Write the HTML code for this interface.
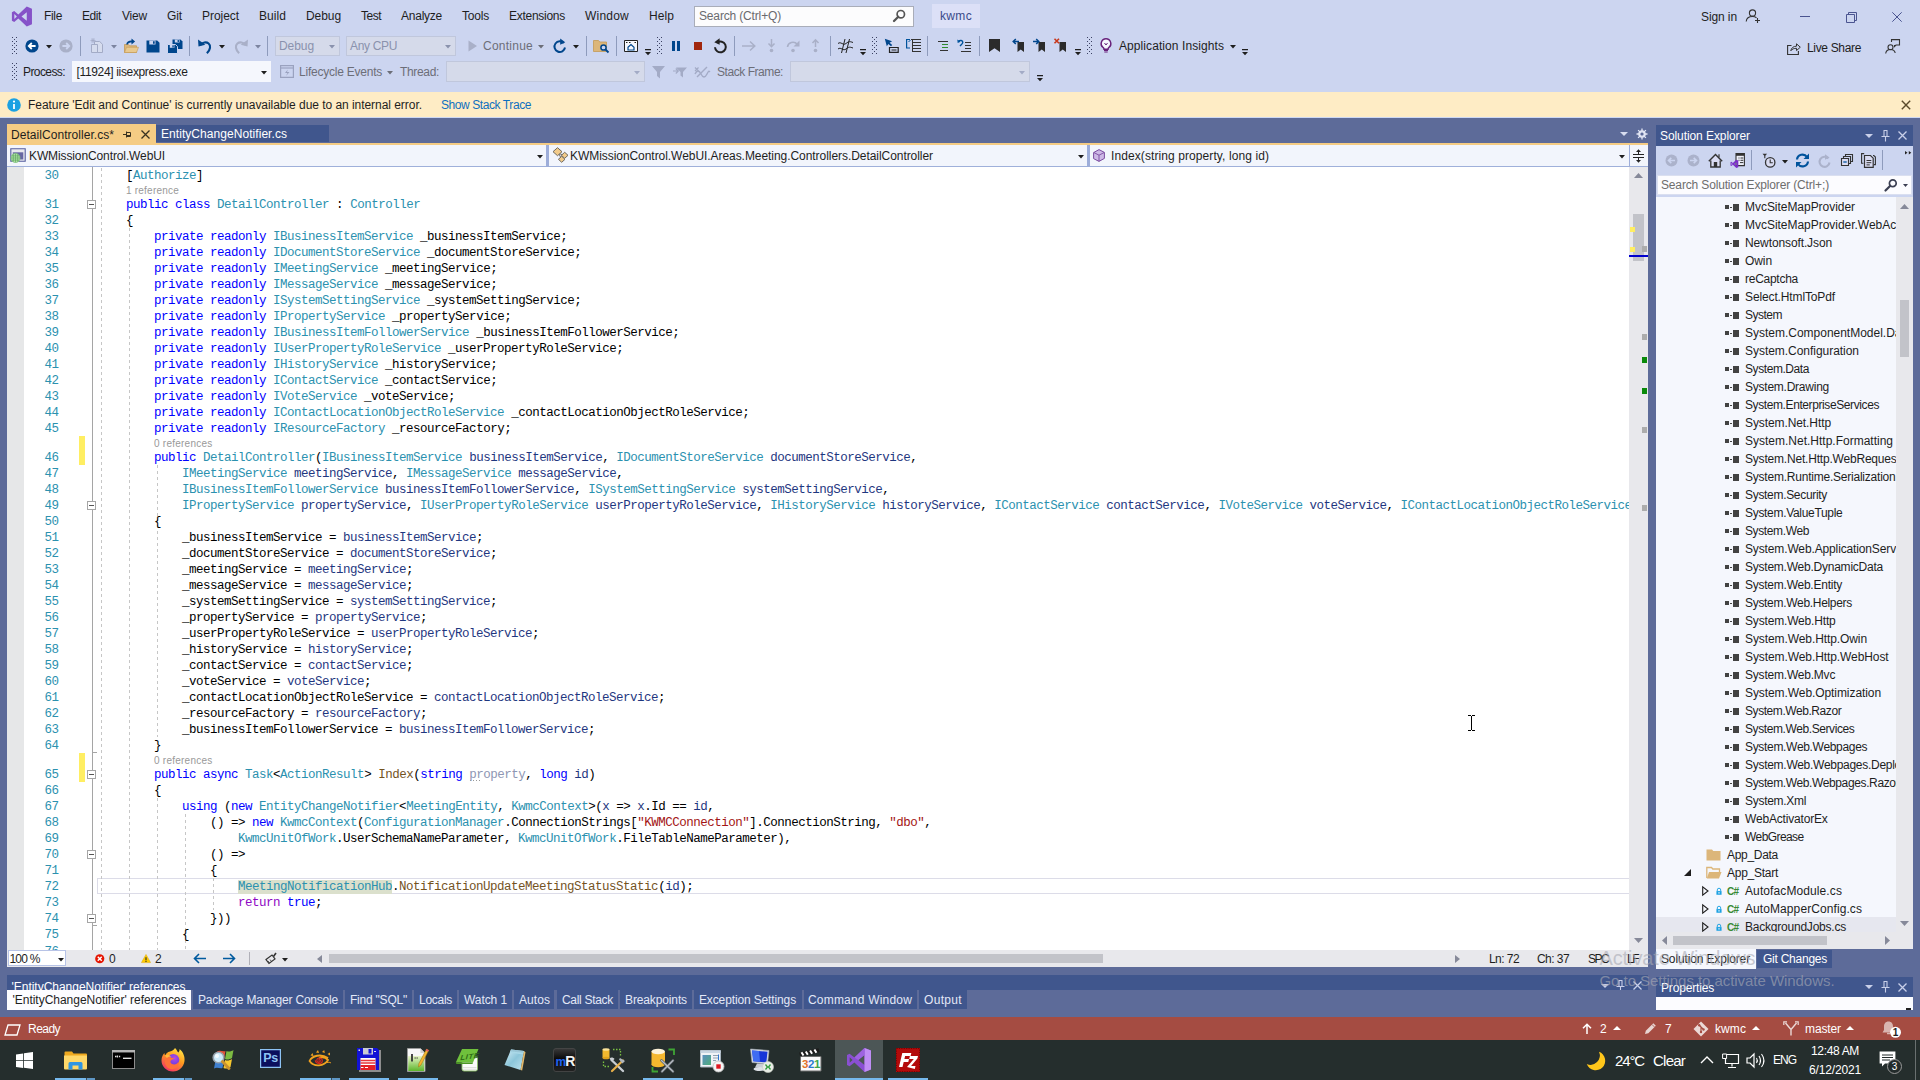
<!DOCTYPE html>
<html><head><meta charset="utf-8"><title>kwmc (Debugging) - Microsoft Visual Studio</title>
<style>
html,body{margin:0;padding:0;}
body{width:1920px;height:1080px;overflow:hidden;position:relative;background:#5D6B99;
 font-family:"Liberation Sans",sans-serif;font-size:12px;color:#1e1e1e;}
body div, body svg{position:absolute;box-sizing:border-box;}
svg{overflow:visible;}
.mono{font-family:"Liberation Mono",monospace;}
.code{font-family:"Liberation Mono",monospace;font-size:12.5px;letter-spacing:-0.5px;line-height:16px;white-space:pre;color:#000;height:16px;}
.code span{position:static;}
.k{color:#0000ff}.t{color:#2b91af}.p{color:#1f377f}.m{color:#74531f}.s{color:#a31515}.c{color:#8f08c4}
.ln{font-family:"Liberation Mono",monospace;font-size:12.5px;letter-spacing:-0.5px;line-height:16px;color:#2b91af;text-align:right;width:40px;left:20px;height:16px;white-space:pre;}
.cl{font-size:10px;color:#9a9a9a;line-height:13px;white-space:pre;}
.h{color:#2b91af;background:#DBE0CC;}
.u{color:#8e96b3;}

</style></head>
<body>
<div style="left:0px;top:0px;width:1920px;height:92px;background:#CCD5F0;"></div>
<div style="left:0px;top:92px;width:1920px;height:26px;background:#FEECC5;"></div>
<div style="left:0px;top:117px;width:1920px;height:1px;background:#CDD8F3;"></div>
<div style="left:0px;top:1017px;width:1920px;height:23px;background:#A54C42;"></div>
<div style="left:0px;top:1040px;width:1920px;height:40px;background:#252E2D;"></div>
<svg style="left:11px;top:5.5px;" preserveAspectRatio="none" width="21.5" height="21" viewBox="0 0 24 22"><path d="M17.6 0.6 23.4 3v16l-5.8 2.4-9.4-8.3-4.6 3.6L1 15.4V6.6l2.6-1.3 4.6 3.6zM3.7 8.3v5.4L6.6 11zm8 2.7 5.9 4.5v-9z" fill="#8652C8"/></svg>
<div style="top:8.0px;line-height:16px;font-size:12px;color:#1e1e1e;white-space:pre;left:44px;letter-spacing:-0.334px;">File</div>
<div style="top:8.0px;line-height:16px;font-size:12px;color:#1e1e1e;white-space:pre;left:82px;letter-spacing:-0.420px;">Edit</div>
<div style="top:8.0px;line-height:16px;font-size:12px;color:#1e1e1e;white-space:pre;left:122px;letter-spacing:-0.199px;">View</div>
<div style="top:8.0px;line-height:16px;font-size:12px;color:#1e1e1e;white-space:pre;left:167px;letter-spacing:-0.111px;">Git</div>
<div style="top:8.0px;line-height:16px;font-size:12px;color:#1e1e1e;white-space:pre;left:202px;letter-spacing:-0.050px;">Project</div>
<div style="top:8.0px;line-height:16px;font-size:12px;color:#1e1e1e;white-space:pre;left:259px;letter-spacing:0.063px;">Build</div>
<div style="top:8.0px;line-height:16px;font-size:12px;color:#1e1e1e;white-space:pre;left:306px;letter-spacing:-0.072px;">Debug</div>
<div style="top:8.0px;line-height:16px;font-size:12px;color:#1e1e1e;white-space:pre;left:361px;letter-spacing:-0.502px;">Test</div>
<div style="top:8.0px;line-height:16px;font-size:12px;color:#1e1e1e;white-space:pre;left:401px;letter-spacing:-0.242px;">Analyze</div>
<div style="top:8.0px;line-height:16px;font-size:12px;color:#1e1e1e;white-space:pre;left:462px;letter-spacing:-0.203px;">Tools</div>
<div style="top:8.0px;line-height:16px;font-size:12px;color:#1e1e1e;white-space:pre;left:509px;letter-spacing:-0.270px;">Extensions</div>
<div style="top:8.0px;line-height:16px;font-size:12px;color:#1e1e1e;white-space:pre;left:585px;letter-spacing:0.220px;">Window</div>
<div style="top:8.0px;line-height:16px;font-size:12px;color:#1e1e1e;white-space:pre;left:649px;letter-spacing:0.080px;">Help</div>
<div style="left:694px;top:5.5px;width:220px;height:21px;background:#FCFCFD;border:1px solid #A9ADB9;"></div>
<div style="top:7.5px;line-height:16px;font-size:12px;color:#6A6A6E;white-space:pre;left:699px;letter-spacing:-0.157px;">Search (Ctrl+Q)</div>
<svg style="left:891.8px;top:8.8px;" width="14" height="14" viewBox="0 0 14 14"><circle cx="8.8" cy="5.2" r="3.7" fill="none" stroke="#555" stroke-width="1.7"/><path d="M6.3 7.7 2 12" stroke="#555" stroke-width="2.3" stroke-linecap="round"/></svg>
<div style="left:932px;top:4px;width:48px;height:24px;background:#DCE0F7;"></div>
<div style="top:7.5px;line-height:16px;font-size:12px;color:#3A4A8A;white-space:pre;left:940px;letter-spacing:0.334px;">kwmc</div>
<div style="top:9.0px;line-height:16px;font-size:12px;color:#1e1e1e;white-space:pre;left:1701px;letter-spacing:-0.099px;">Sign in</div>
<svg style="left:1745px;top:8px;" width="16" height="16" viewBox="0 0 16 16"><circle cx="7.500" cy="5" r="3.100" fill="none" stroke="#333" stroke-width="1.100"/><path d="M1.200 13.500c.300-3.200 2.800-5 6.300-5 1.600 0 3 .500 4 1.300" fill="none" stroke="#333" stroke-width="1.100"/><path d="M12.500 10v5M10 12.500h5" stroke="#333" stroke-width="1.100"/></svg>
<div style="left:1800px;top:16px;width:10px;height:1px;background:#4A5490;"></div>
<svg style="left:1845.5px;top:11.5px;" width="11" height="11" viewBox="0 0 11 11"><path d="M.500 2.500h8v8h-8zM2.500 2.500v-2h8v8h-2" fill="none" stroke="#4A5490" stroke-width="1"/></svg>
<svg style="left:1892px;top:12px;" width="10" height="10" viewBox="0 0 10 10"><path d="M.300.300l9.400 9.400M9.700.300.300 9.700" stroke="#4A5490" stroke-width="1"/></svg>
<svg style="left:1787px;top:41px;" width="14" height="14" viewBox="0 0 14 14"><path d="M4.500 4.500H.600v9h10.800v-3.500" fill="none" stroke="#333" stroke-width="1.100"/><path d="M3.800 9.800c.500-3 2.700-4.600 5.700-4.600V2.800l3.800 3.400-3.800 3.400V7.300c-2.400 0-4.100.500-5.700 2.500z" fill="none" stroke="#333" stroke-width="1" stroke-linejoin="round"/></svg>
<div style="top:39.5px;line-height:16px;font-size:12px;color:#1e1e1e;white-space:pre;left:1807px;letter-spacing:-0.337px;">Live Share</div>
<svg style="left:1885px;top:39px;" width="15" height="15" viewBox="0 0 15 15"><circle cx="5.500" cy="8.300" r="2.500" fill="none" stroke="#333" stroke-width="1.100"/><path d="M.700 14.500c.300-2.600 2-4 4.800-4s4.300 1.300 4.700 3.500" fill="none" stroke="#333" stroke-width="1.100"/><path d="M6.500 3V.600h8v5.400h-3.500l-1.500 1.500V6" fill="none" stroke="#333" stroke-width="1.100"/></svg>
<svg style="left:12px;top:37px" width="5" height="18" viewBox="0 0 5 18" shape-rendering="crispEdges" fill="#3B4163"><rect x="0" y="0" width="1" height="1"/><rect x="4" y="0" width="1" height="1"/><rect x="2" y="2" width="1" height="1"/><rect x="0" y="4" width="1" height="1"/><rect x="4" y="4" width="1" height="1"/><rect x="2" y="6" width="1" height="1"/><rect x="0" y="8" width="1" height="1"/><rect x="4" y="8" width="1" height="1"/><rect x="2" y="10" width="1" height="1"/><rect x="0" y="12" width="1" height="1"/><rect x="4" y="12" width="1" height="1"/><rect x="2" y="14" width="1" height="1"/><rect x="0" y="16" width="1" height="1"/><rect x="4" y="16" width="1" height="1"/></svg>
<svg style="left:25px;top:39px;" width="14" height="14" viewBox="0 0 14 14"><circle cx="7" cy="7" r="6.6" fill="#00468C"/><path d="M10.6 7H4.2M6.8 4 3.8 7l3 3" fill="none" stroke="#fff" stroke-width="1.8"/></svg>
<svg style="left:46.0px;top:44.75px" width="6" height="3.5" viewBox="0 0 6 3.5"><path d="M0 0h6l-3.0 3.5z" fill="#1e1e1e"/></svg>
<svg style="left:59px;top:39px;" width="14" height="14" viewBox="0 0 14 14"><circle cx="7" cy="7" r="6.6" fill="#A9B0C8"/><path d="M3.4 7h6.4M7.2 4l3 3-3 3" fill="none" stroke="#CCD5F0" stroke-width="1.8"/></svg>
<div style="left:80px;top:36px;width:1px;height:20px;background:#8E9BBC;"></div>
<svg style="left:89px;top:38px;" width="15" height="16" viewBox="0 0 15 16"><path d="M5.5 3.5h5.2L13.5 6.3v8.2h-8z" fill="#D6DCEE" stroke="#A3ABC6" stroke-width="1"/><path d="M2.5 6.5h6v8h-6z" fill="#D6DCEE" stroke="#A3ABC6" stroke-width="1"/><path d="M4 0v5M1.5 2.5h5M2.2.8l3.6 3.4M5.8.8 2.2 4.2" stroke="#A3ABC6" stroke-width=".8"/></svg>
<svg style="left:111.0px;top:44.75px" width="6" height="3.5" viewBox="0 0 6 3.5"><path d="M0 0h6l-3.0 3.5z" fill="#7C84A0"/></svg>
<svg style="left:123px;top:38px;" width="17" height="16" viewBox="0 0 17 16"><path d="M1.5 6.5h4l1.2 1.3h6.8v6.7h-12z" fill="#DCB67A" stroke="#C49A55" stroke-width=".8"/><path d="M3.5 9.3h12l-2 5.2h-12z" fill="#E8C98F" stroke="#C49A55" stroke-width=".6"/><path d="M3.2 6.5C3.4 3.6 5.6 2.4 8.5 2.4V.5l3.6 3-3.6 3V4.4c-1.9 0-3.3.5-3.7 2.1z" fill="#00468C"/></svg>
<svg style="left:146px;top:40px;" width="14" height="13" viewBox="0 0 14 13"><path d="M.5.5h10.7l2.3 2.3v9.7H.5z" fill="#00468C"/><path d="M3.3.5h6.2v4H3.3z" fill="#CCD5F0"/><path d="M7 1.2h1.7v2.6H7z" fill="#00468C"/></svg>
<svg style="left:167px;top:39px;" width="16" height="15" viewBox="0 0 16 15"><path d="M5.5.5h8l2 2v7.5h-10z" fill="#00468C"/><path d="M7.8.5h4.8v3H7.8z" fill="#CCD5F0"/><path d="M10.6 1h1.3v2h-1.3z" fill="#00468C"/><path d="M.5 5.5h8l2 2v7H.5z" fill="#00468C" stroke="#CCD5F0" stroke-width="1"/><path d="M2.8 5.8h4.6v3H2.8z" fill="#CCD5F0"/><path d="M5.4 6.2h1.3v2.2H5.4z" fill="#00468C"/></svg>
<div style="left:189px;top:36px;width:1px;height:20px;background:#8E9BBC;"></div>
<svg style="left:197px;top:38px;" width="16" height="16" viewBox="0 0 16 16"><path d="M3.3 6.8c2.2-2.6 6-3.3 8.3-1.3 2.4 2 2 6-1.7 9.8" fill="none" stroke="#00468C" stroke-width="2.1"/><path d="M1 1.4l.5 7.2 6.8-1.9z" fill="#00468C"/></svg>
<svg style="left:219.0px;top:44.75px" width="6" height="3.5" viewBox="0 0 6 3.5"><path d="M0 0h6l-3.0 3.5z" fill="#1e1e1e"/></svg>
<svg style="left:233px;top:38px;" width="16" height="16" viewBox="0 0 16 16"><path d="M12.7 6.8C10.5 4.2 6.7 3.5 4.4 5.5 2 7.500 2.400 11.500 6.100 15.300" fill="none" stroke="#A9B0C8" stroke-width="2.1"/><path d="M15 1.400l-.5 7.200-6.800-1.900z" fill="#A9B0C8"/></svg>
<svg style="left:255.0px;top:44.75px" width="6" height="3.5" viewBox="0 0 6 3.5"><path d="M0 0h6l-3.0 3.5z" fill="#7C84A0"/></svg>
<div style="left:267px;top:36px;width:1px;height:20px;background:#8E9BBC;"></div>
<div style="left:275px;top:36px;width:65px;height:20px;background:#D5DAEA;border:1px solid #C0C7DC;"></div>
<div style="top:38.0px;line-height:16px;font-size:12px;color:#8A92AD;white-space:pre;left:279px;letter-spacing:-0.072px;">Debug</div>
<svg style="left:329.0px;top:44.75px" width="6" height="3.5" viewBox="0 0 6 3.5"><path d="M0 0h6l-3.0 3.5z" fill="#8A92AD"/></svg>
<div style="left:346px;top:36px;width:110px;height:20px;background:#D5DAEA;border:1px solid #C0C7DC;"></div>
<div style="top:38.0px;line-height:16px;font-size:12px;color:#8A92AD;white-space:pre;left:350px;letter-spacing:-0.336px;">Any CPU</div>
<svg style="left:445.0px;top:44.75px" width="6" height="3.5" viewBox="0 0 6 3.5"><path d="M0 0h6l-3.0 3.5z" fill="#8A92AD"/></svg>
<svg style="left:468px;top:40px;" width="10" height="12" viewBox="0 0 10 12"><path d="M.5.5v11l8.500-5.500z" fill="#A9B0C8"/></svg>
<div style="top:38.0px;line-height:16px;font-size:12px;color:#6C6E78;white-space:pre;left:483px;letter-spacing:0.245px;">Continue</div>
<svg style="left:538.0px;top:44.75px" width="6" height="3.5" viewBox="0 0 6 3.5"><path d="M0 0h6l-3.0 3.5z" fill="#6C6E78"/></svg>
<svg style="left:552px;top:38px;" width="15" height="16" viewBox="0 0 15 16"><path d="M11.800 5.200A5.300 5.300 0 1 0 13 9.500" fill="none" stroke="#00468C" stroke-width="2"/><path d="M8.200 0.500v6.300l5-2.600z" fill="#00468C"/></svg>
<svg style="left:573.0px;top:44.75px" width="6" height="3.5" viewBox="0 0 6 3.5"><path d="M0 0h6l-3.0 3.5z" fill="#1e1e1e"/></svg>
<div style="left:586px;top:36px;width:1px;height:20px;background:#8E9BBC;"></div>
<svg style="left:593px;top:38px;" width="17" height="16" viewBox="0 0 17 16"><path d="M.5 2.500h5l1.300 1.500h6.700v9.500H.5z" fill="#DCB67A" stroke="#C49A55" stroke-width=".8"/><circle cx="10.500" cy="9.500" r="2.600" fill="#CCD5F0" stroke="#00468C" stroke-width="1.500"/><path d="M12.500 11.500l3 3" stroke="#00468C" stroke-width="1.800"/></svg>
<div style="left:616px;top:36px;width:1px;height:20px;background:#8E9BBC;"></div>
<svg style="left:624px;top:40px;" width="14" height="12" viewBox="0 0 14 12"><path d="M.5.500h13v11H.5z" fill="#F5F7FD" stroke="#222" stroke-width="1"/><path d="M2 2.500h1.500M5 2.500h1.500M10.500 2.500H12" stroke="#222" stroke-width="1"/><path d="M4 7.300 7 4.500l3 2.800v2.700H4z" fill="none" stroke="#00468C" stroke-width="1.200"/></svg>
<svg style="left:645px;top:48.5px" width="6" height="7" viewBox="0 0 6 7"><path d="M0 0h6v1.200H0zM0 3h6L3 6.200z" fill="#1e1e1e"/></svg>
<svg style="left:657px;top:37px" width="5" height="18" viewBox="0 0 5 18" shape-rendering="crispEdges" fill="#3B4163"><rect x="0" y="0" width="1" height="1"/><rect x="4" y="0" width="1" height="1"/><rect x="2" y="2" width="1" height="1"/><rect x="0" y="4" width="1" height="1"/><rect x="4" y="4" width="1" height="1"/><rect x="2" y="6" width="1" height="1"/><rect x="0" y="8" width="1" height="1"/><rect x="4" y="8" width="1" height="1"/><rect x="2" y="10" width="1" height="1"/><rect x="0" y="12" width="1" height="1"/><rect x="4" y="12" width="1" height="1"/><rect x="2" y="14" width="1" height="1"/><rect x="0" y="16" width="1" height="1"/><rect x="4" y="16" width="1" height="1"/></svg>
<div style="left:672px;top:41px;width:3px;height:10px;background:#00468C;"></div>
<div style="left:677px;top:41px;width:3px;height:10px;background:#00468C;"></div>
<div style="left:694px;top:42px;width:8px;height:8px;background:#A1260D;"></div>
<svg style="left:713px;top:38px;" width="15" height="16" viewBox="0 0 15 16"><path d="M4.200 4.600A5.400 5.400 0 1 1 2 9.200" fill="none" stroke="#222" stroke-width="2"/><path d="M6.600 0.300v6.500L1.300 4.200z" fill="#222"/></svg>
<div style="left:734px;top:36px;width:1px;height:20px;background:#8E9BBC;"></div>
<svg style="left:742px;top:40px;" width="15" height="12" viewBox="0 0 15 12"><path d="M0 6h12M8 1.500 12.800 6 8 10.500" fill="none" stroke="#A9B0C8" stroke-width="1.500"/></svg>
<svg style="left:767px;top:39px;" width="9" height="14" viewBox="0 0 9 14"><path d="M4.500 0v7M1.500 4.500l3 3.200 3-3.200" fill="none" stroke="#A9B0C8" stroke-width="1.500"/><circle cx="4.500" cy="11.500" r="1.800" fill="#A9B0C8"/></svg>
<svg style="left:786px;top:39px;" width="15" height="14" viewBox="0 0 15 14"><path d="M1.500 8C2 3.500 8 1.500 11.500 5.500" fill="none" stroke="#A9B0C8" stroke-width="1.600"/><path d="M13.500 1.500v6h-6z" fill="#A9B0C8"/><circle cx="7" cy="11.500" r="1.800" fill="#A9B0C8"/></svg>
<svg style="left:811px;top:39px;" width="9" height="14" viewBox="0 0 9 14"><path d="M4.500 8V1M1.500 4l3-3.200 3 3.200" fill="none" stroke="#A9B0C8" stroke-width="1.500"/><circle cx="4.500" cy="11.500" r="1.800" fill="#A9B0C8"/></svg>
<div style="left:830px;top:36px;width:1px;height:20px;background:#8E9BBC;"></div>
<svg style="left:837px;top:38px;" width="17" height="16" viewBox="0 0 17 16"><path d="M1 5.500c3-2.500 5 2.500 8 0s4-2 7-1M1 11c3-2.500 5 2.500 8 0s4-2 7-1" fill="none" stroke="#222" stroke-width="1"/><path d="M4.500 15 8 1M9 15l3.500-14" stroke="#222" stroke-width="1"/></svg>
<svg style="left:860px;top:48.5px" width="6" height="7" viewBox="0 0 6 7"><path d="M0 0h6v1.200H0zM0 3h6L3 6.200z" fill="#1e1e1e"/></svg>
<svg style="left:872px;top:37px" width="5" height="18" viewBox="0 0 5 18" shape-rendering="crispEdges" fill="#3B4163"><rect x="0" y="0" width="1" height="1"/><rect x="4" y="0" width="1" height="1"/><rect x="2" y="2" width="1" height="1"/><rect x="0" y="4" width="1" height="1"/><rect x="4" y="4" width="1" height="1"/><rect x="2" y="6" width="1" height="1"/><rect x="0" y="8" width="1" height="1"/><rect x="4" y="8" width="1" height="1"/><rect x="2" y="10" width="1" height="1"/><rect x="0" y="12" width="1" height="1"/><rect x="4" y="12" width="1" height="1"/><rect x="2" y="14" width="1" height="1"/><rect x="0" y="16" width="1" height="1"/><rect x="4" y="16" width="1" height="1"/></svg>
<svg style="left:884px;top:38px;" width="15" height="16" viewBox="0 0 15 16"><path d="M.8.800l2 7.500 1.600-2.400 2.600 2.400 1.200-1.300L5.600 4.700l2.500-1.500z" fill="#00468C"/><path d="M5.500 9.500h8.700v4.800H5.500z" fill="none" stroke="#222" stroke-width="1.200"/><path d="M7.500 12h5" stroke="#222" stroke-width="1"/></svg>
<svg style="left:906px;top:39px;" width="15" height="14" viewBox="0 0 15 14"><path d="M4 .500H.600v8.500H4" fill="none" stroke="#00539C" stroke-width="1.200"/><path d="M2.500 3 4.500 1M2.500 3" stroke="#00539C" stroke-width="1"/><g shape-rendering="crispEdges" fill="#333"><rect x="5" y="0" width="10" height="1"/><rect x="7" y="3" width="8" height="1"/><rect x="7" y="6" width="8" height="1"/><rect x="7" y="9" width="8" height="1"/><rect x="7" y="12" width="8" height="1"/><rect x="6" y="0" width="1" height="13"/></g></svg>
<div style="left:927px;top:36px;width:1px;height:20px;background:#8E9BBC;"></div>
<svg style="left:938px;top:41px;" width="11" height="10" viewBox="0 0 11 10"><g shape-rendering="crispEdges"><rect x="0" y="0" width="10" height="1" fill="#333"/><rect x="4" y="3" width="6" height="1" fill="#2E8B2E"/><rect x="4" y="6" width="6" height="1" fill="#2E8B2E"/><rect x="2" y="9" width="8" height="1" fill="#333"/></g></svg>
<svg style="left:957px;top:39px;" width="15" height="13" viewBox="0 0 15 13"><g shape-rendering="crispEdges" fill="#333"><rect x="8" y="3" width="6" height="1"/><rect x="8" y="6" width="6" height="1"/><rect x="8" y="9" width="6" height="1"/><rect x="4" y="12" width="10" height="1"/></g><path d="M1.500 2.500c1.500-1.800 4.500-1.300 4.300 1-.2 1.300-1.500 2-2.800 3.500" fill="none" stroke="#00539C" stroke-width="1.400"/><path d="M.300.500l.4 3.500 3-1.200z" fill="#00539C"/></svg>
<div style="left:979px;top:36px;width:1px;height:20px;background:#8E9BBC;"></div>
<svg style="left:989px;top:39px;" width="11" height="13" viewBox="0 0 11 13"><path d="M0 0h11v13L5.500 9.200 0 13z" fill="#2b2b2b"/></svg>
<svg style="left:1012px;top:38px;" width="13" height="15" viewBox="0 0 13 15"><path d="M5.500 4h6.500v10l-3.250-2.500L5.500 14z" fill="#2b2b2b"/><path d="M7 3.500H1.500M3.800 1 1.200 3.500l2.600 2.500" fill="none" stroke="#00468C" stroke-width="1.500"/></svg>
<svg style="left:1033px;top:38px;" width="13" height="15" viewBox="0 0 13 15"><path d="M5.500 4h6.500v10l-3.250-2.500L5.500 14z" fill="#2b2b2b"/><path d="M0 3.500h5.500M3.200 1l2.600 2.500L3.200 6" fill="none" stroke="#00468C" stroke-width="1.500"/></svg>
<svg style="left:1054px;top:38px;" width="13" height="15" viewBox="0 0 13 15"><path d="M5.500 4h6.500v10l-3.250-2.500L5.500 14z" fill="#2b2b2b"/><path d="M.5.800l4.500 4.500M5 .8.5 5.300" stroke="#C8371B" stroke-width="1.600"/></svg>
<svg style="left:1075px;top:48.5px" width="6" height="7" viewBox="0 0 6 7"><path d="M0 0h6v1.200H0zM0 3h6L3 6.200z" fill="#1e1e1e"/></svg>
<svg style="left:1087px;top:37px" width="5" height="18" viewBox="0 0 5 18" shape-rendering="crispEdges" fill="#3B4163"><rect x="0" y="0" width="1" height="1"/><rect x="4" y="0" width="1" height="1"/><rect x="2" y="2" width="1" height="1"/><rect x="0" y="4" width="1" height="1"/><rect x="4" y="4" width="1" height="1"/><rect x="2" y="6" width="1" height="1"/><rect x="0" y="8" width="1" height="1"/><rect x="4" y="8" width="1" height="1"/><rect x="2" y="10" width="1" height="1"/><rect x="0" y="12" width="1" height="1"/><rect x="4" y="12" width="1" height="1"/><rect x="2" y="14" width="1" height="1"/><rect x="0" y="16" width="1" height="1"/><rect x="4" y="16" width="1" height="1"/></svg>
<svg style="left:1100px;top:38px;" width="12" height="16" viewBox="0 0 12 16"><path d="M6 .8a4.800 4.800 0 0 0-2.800 8.700c.5.500.8 1 .8 1.800h4c0-.8.300-1.300.8-1.800A4.800 4.800 0 0 0 6 .8z" fill="#F5F7FD" stroke="#68217A" stroke-width="1.500"/><path d="M4 12.300h4M4.300 14h3.400" stroke="#68217A" stroke-width="1.200"/><path d="M4.500 5l1.500 2 1.500-2" fill="none" stroke="#68217A" stroke-width="1"/></svg>
<div style="top:38.0px;line-height:16px;font-size:12px;color:#1e1e1e;white-space:pre;left:1119px;letter-spacing:0.080px;">Application Insights</div>
<svg style="left:1230.0px;top:44.75px" width="6" height="3.5" viewBox="0 0 6 3.5"><path d="M0 0h6l-3.0 3.5z" fill="#1e1e1e"/></svg>
<svg style="left:1242px;top:48.5px" width="6" height="7" viewBox="0 0 6 7"><path d="M0 0h6v1.200H0zM0 3h6L3 6.200z" fill="#1e1e1e"/></svg>
<svg style="left:12px;top:63px" width="5" height="18" viewBox="0 0 5 18" shape-rendering="crispEdges" fill="#3B4163"><rect x="0" y="0" width="1" height="1"/><rect x="4" y="0" width="1" height="1"/><rect x="2" y="2" width="1" height="1"/><rect x="0" y="4" width="1" height="1"/><rect x="4" y="4" width="1" height="1"/><rect x="2" y="6" width="1" height="1"/><rect x="0" y="8" width="1" height="1"/><rect x="4" y="8" width="1" height="1"/><rect x="2" y="10" width="1" height="1"/><rect x="0" y="12" width="1" height="1"/><rect x="4" y="12" width="1" height="1"/><rect x="2" y="14" width="1" height="1"/><rect x="0" y="16" width="1" height="1"/><rect x="4" y="16" width="1" height="1"/></svg>
<div style="top:64.0px;line-height:16px;font-size:12px;color:#1e1e1e;white-space:pre;left:23px;letter-spacing:-0.585px;">Process:</div>
<div style="left:72px;top:61px;width:199px;height:21px;background:#F5F7FD;"></div>
<div style="top:64.0px;line-height:16px;font-size:12px;color:#1e1e1e;white-space:pre;left:76.5px;letter-spacing:-0.342px;">[11924] iisexpress.exe</div>
<svg style="left:261.0px;top:70.75px" width="6" height="3.5" viewBox="0 0 6 3.5"><path d="M0 0h6l-3.0 3.5z" fill="#1e1e1e"/></svg>
<svg style="left:280px;top:65px;" width="14" height="13" viewBox="0 0 14 13"><path d="M.6.600h12.800v11.800H.6z" fill="none" stroke="#9AA2BF" stroke-width="1.200"/><path d="M.6 3h12.800" stroke="#9AA2BF" stroke-width="1.200"/><path d="M7.800 4.500 5 8h2.500L6 11l3.500-4H7z" fill="#9AA2BF"/></svg>
<div style="top:64.0px;line-height:16px;font-size:12px;color:#6C6E78;white-space:pre;left:299px;letter-spacing:-0.232px;">Lifecycle Events</div>
<svg style="left:387.0px;top:70.75px" width="6" height="3.5" viewBox="0 0 6 3.5"><path d="M0 0h6l-3.0 3.5z" fill="#6C6E78"/></svg>
<div style="top:64.0px;line-height:16px;font-size:12px;color:#6C6E78;white-space:pre;left:400px;letter-spacing:-0.337px;">Thread:</div>
<div style="left:446px;top:61px;width:199px;height:21px;background:#D5DAEA;border:1px solid #C0C7DC;"></div>
<svg style="left:634.0px;top:70.75px" width="6" height="3.5" viewBox="0 0 6 3.5"><path d="M0 0h6l-3.0 3.5z" fill="#A3ABC6"/></svg>
<svg style="left:652px;top:66px;" width="14" height="13" viewBox="0 0 14 13"><path d="M0 0h13L8 6v6.500L5 10V6z" fill="#A3ABC6"/></svg>
<svg style="left:673px;top:65px;" width="15" height="14" viewBox="0 0 15 14"><path d="M3 2.500h11l-4 4.500v5.500l-2.500-2V7z" fill="#A3ABC6"/><path d="M0 6h5M2.800 3.500 5.300 6 2.800 8.500" fill="none" stroke="#A3ABC6" stroke-width="1.200"/></svg>
<svg style="left:694px;top:66px;" width="17" height="12" viewBox="0 0 17 12"><path d="M1 8c2-4 4-4 6 0s4 4 6 0 2-3 3-2" fill="none" stroke="#A3ABC6" stroke-width="1.400"/><path d="M3 11 13 1" stroke="#A3ABC6" stroke-width="1.400"/><path d="M1 1.500l3.500 3.500M4.500 1.500 1 5" stroke="#A3ABC6" stroke-width="1.200"/></svg>
<div style="top:64.0px;line-height:16px;font-size:12px;color:#6C6E78;white-space:pre;left:717px;letter-spacing:-0.446px;">Stack Frame:</div>
<div style="left:790px;top:61px;width:240px;height:21px;background:#D5DAEA;border:1px solid #C0C7DC;"></div>
<svg style="left:1019.0px;top:70.75px" width="6" height="3.5" viewBox="0 0 6 3.5"><path d="M0 0h6l-3.0 3.5z" fill="#A3ABC6"/></svg>
<svg style="left:1037px;top:74.5px" width="6" height="7" viewBox="0 0 6 7"><path d="M0 0h6v1.200H0zM0 3h6L3 6.200z" fill="#1e1e1e"/></svg>
<svg style="left:7px;top:98px;" width="14" height="14" viewBox="0 0 14 14"><circle cx="7" cy="7" r="6.800" fill="#1BA1E2"/><path d="M7 6v5" stroke="#fff" stroke-width="1.800"/><circle cx="7" cy="3.600" r="1.100" fill="#fff"/></svg>
<div style="top:96.5px;line-height:16px;font-size:12px;color:#1e1e1e;white-space:pre;left:28px;letter-spacing:-0.045px;">Feature 'Edit and Continue' is currently unavailable due to an internal error.</div>
<div style="top:96.5px;line-height:16px;font-size:12px;color:#0E70C0;white-space:pre;left:441px;letter-spacing:-0.419px;">Show Stack Trace</div>
<svg style="left:1901px;top:100px;" width="10" height="10" viewBox="0 0 10 10"><path d="M.8.800l8.400 8.400M9.200.800.8 9.200" stroke="#5a4a2a" stroke-width="1.400"/></svg>
<div style="left:7px;top:124px;width:149px;height:19px;background:#F5CC84;"></div>
<div style="left:156px;top:125px;width:173px;height:17px;background:#40568D;"></div>
<div style="left:7px;top:143px;width:1641px;height:2px;background:#F5CC84;"></div>
<div style="left:7px;top:145px;width:1641px;height:22px;background:#F2F5FC;border-bottom:1px solid #9FB0DA;"></div>
<div style="left:7px;top:167px;width:1641px;height:783px;background:#ffffff;"></div>
<div style="left:7px;top:167px;width:17px;height:783px;background:#E6E7E8;"></div>
<div style="left:1629px;top:167px;width:19px;height:783px;background:#E8E8EC;"></div>
<div style="left:7px;top:950px;width:1641px;height:17px;background:#E8E8EC;"></div>
<div style="left:7px;top:167px;width:1622px;height:783px;overflow:hidden;">
<div style="left:72px;top:269px;width:6px;height:29px;background:#FFEE62;"></div>
<div style="left:72px;top:586px;width:6px;height:29px;background:#FFEE62;"></div>
<div style="left:90px;top:711px;width:1540px;height:16px;border:1px solid #DCDCE8;"></div>
<div style="left:94px;top:1px;width:1px;height:782px;background:repeating-linear-gradient(to bottom,#C6C6C6 0,#C6C6C6 3px,transparent 3px,transparent 6px);"></div>
<div style="left:122px;top:61px;width:1px;height:722px;background:repeating-linear-gradient(to bottom,#C6C6C6 0,#C6C6C6 3px,transparent 3px,transparent 6px);"></div>
<div style="left:150px;top:298px;width:1px;height:272px;background:repeating-linear-gradient(to bottom,#C6C6C6 0,#C6C6C6 3px,transparent 3px,transparent 6px);"></div>
<div style="left:150px;top:631px;width:1px;height:152px;background:repeating-linear-gradient(to bottom,#C6C6C6 0,#C6C6C6 3px,transparent 3px,transparent 6px);"></div>
<div style="left:178px;top:647px;width:1px;height:136px;background:repeating-linear-gradient(to bottom,#C6C6C6 0,#C6C6C6 3px,transparent 3px,transparent 6px);"></div>
<div style="left:206px;top:711px;width:1px;height:32px;background:repeating-linear-gradient(to bottom,#C6C6C6 0,#C6C6C6 3px,transparent 3px,transparent 6px);"></div>
<div style="left:85px;top:0px;width:1px;height:790px;background:#A5A5A5;"></div>
<div style="left:85px;top:585px;width:5px;height:1px;background:#A5A5A5;"></div>
<div style="left:85px;top:758px;width:5px;height:1px;background:#A5A5A5;"></div>
<div style="left:80px;top:33px;width:9px;height:9px;background:#fff;border:1px solid #A5A5A5;"></div>
<div style="left:82px;top:37px;width:5px;height:1px;background:#555;"></div>
<div style="left:80px;top:334px;width:9px;height:9px;background:#fff;border:1px solid #A5A5A5;"></div>
<div style="left:82px;top:338px;width:5px;height:1px;background:#555;"></div>
<div style="left:80px;top:603px;width:9px;height:9px;background:#fff;border:1px solid #A5A5A5;"></div>
<div style="left:82px;top:607px;width:5px;height:1px;background:#555;"></div>
<div style="left:80px;top:683px;width:9px;height:9px;background:#fff;border:1px solid #A5A5A5;"></div>
<div style="left:82px;top:687px;width:5px;height:1px;background:#555;"></div>
<div style="left:80px;top:747px;width:9px;height:9px;background:#fff;border:1px solid #A5A5A5;"></div>
<div style="left:82px;top:751px;width:5px;height:1px;background:#555;"></div>
<div class="ln" style="top:1px;left:11.5px;">30</div>
<div class="code" style="left:91px;top:1px;">    [<span class="t">Authorize</span>]</div>
<div class="ln" style="top:30px;left:11.5px;">31</div>
<div class="code" style="left:91px;top:30px;">    <span class="k">public</span> <span class="k">class</span> <span class="t">DetailController</span> : <span class="t">Controller</span></div>
<div class="ln" style="top:46px;left:11.5px;">32</div>
<div class="code" style="left:91px;top:46px;">    {</div>
<div class="ln" style="top:62px;left:11.5px;">33</div>
<div class="code" style="left:91px;top:62px;">        <span class="k">private</span> <span class="k">readonly</span> <span class="t">IBusinessItemService</span> _businessItemService;</div>
<div class="ln" style="top:78px;left:11.5px;">34</div>
<div class="code" style="left:91px;top:78px;">        <span class="k">private</span> <span class="k">readonly</span> <span class="t">IDocumentStoreService</span> _documentStoreService;</div>
<div class="ln" style="top:94px;left:11.5px;">35</div>
<div class="code" style="left:91px;top:94px;">        <span class="k">private</span> <span class="k">readonly</span> <span class="t">IMeetingService</span> _meetingService;</div>
<div class="ln" style="top:110px;left:11.5px;">36</div>
<div class="code" style="left:91px;top:110px;">        <span class="k">private</span> <span class="k">readonly</span> <span class="t">IMessageService</span> _messageService;</div>
<div class="ln" style="top:126px;left:11.5px;">37</div>
<div class="code" style="left:91px;top:126px;">        <span class="k">private</span> <span class="k">readonly</span> <span class="t">ISystemSettingService</span> _systemSettingService;</div>
<div class="ln" style="top:142px;left:11.5px;">38</div>
<div class="code" style="left:91px;top:142px;">        <span class="k">private</span> <span class="k">readonly</span> <span class="t">IPropertyService</span> _propertyService;</div>
<div class="ln" style="top:158px;left:11.5px;">39</div>
<div class="code" style="left:91px;top:158px;">        <span class="k">private</span> <span class="k">readonly</span> <span class="t">IBusinessItemFollowerService</span> _businessItemFollowerService;</div>
<div class="ln" style="top:174px;left:11.5px;">40</div>
<div class="code" style="left:91px;top:174px;">        <span class="k">private</span> <span class="k">readonly</span> <span class="t">IUserPropertyRoleService</span> _userPropertyRoleService;</div>
<div class="ln" style="top:190px;left:11.5px;">41</div>
<div class="code" style="left:91px;top:190px;">        <span class="k">private</span> <span class="k">readonly</span> <span class="t">IHistoryService</span> _historyService;</div>
<div class="ln" style="top:206px;left:11.5px;">42</div>
<div class="code" style="left:91px;top:206px;">        <span class="k">private</span> <span class="k">readonly</span> <span class="t">IContactService</span> _contactService;</div>
<div class="ln" style="top:222px;left:11.5px;">43</div>
<div class="code" style="left:91px;top:222px;">        <span class="k">private</span> <span class="k">readonly</span> <span class="t">IVoteService</span> _voteService;</div>
<div class="ln" style="top:238px;left:11.5px;">44</div>
<div class="code" style="left:91px;top:238px;">        <span class="k">private</span> <span class="k">readonly</span> <span class="t">IContactLocationObjectRoleService</span> _contactLocationObjectRoleService;</div>
<div class="ln" style="top:254px;left:11.5px;">45</div>
<div class="code" style="left:91px;top:254px;">        <span class="k">private</span> <span class="k">readonly</span> <span class="t">IResourceFactory</span> _resourceFactory;</div>
<div class="ln" style="top:283px;left:11.5px;">46</div>
<div class="code" style="left:91px;top:283px;">        <span class="k">public</span> <span class="t">DetailController</span>(<span class="t">IBusinessItemService</span> <span class="p">businessItemService</span>, <span class="t">IDocumentStoreService</span> <span class="p">documentStoreService</span>,</div>
<div class="ln" style="top:299px;left:11.5px;">47</div>
<div class="code" style="left:91px;top:299px;">            <span class="t">IMeetingService</span> <span class="p">meetingService</span>, <span class="t">IMessageService</span> <span class="p">messageService</span>,</div>
<div class="ln" style="top:315px;left:11.5px;">48</div>
<div class="code" style="left:91px;top:315px;">            <span class="t">IBusinessItemFollowerService</span> <span class="p">businessItemFollowerService</span>, <span class="t">ISystemSettingService</span> <span class="p">systemSettingService</span>,</div>
<div class="ln" style="top:331px;left:11.5px;">49</div>
<div class="code" style="left:91px;top:331px;">            <span class="t">IPropertyService</span> <span class="p">propertyService</span>, <span class="t">IUserPropertyRoleService</span> <span class="p">userPropertyRoleService</span>, <span class="t">IHistoryService</span> <span class="p">historyService</span>, <span class="t">IContactService</span> <span class="p">contactService</span>, <span class="t">IVoteService</span> <span class="p">voteService</span>, <span class="t">IContactLocationObjectRoleService</span> <span class="p">contactLocationObjectRoleService</span>,</div>
<div class="ln" style="top:347px;left:11.5px;">50</div>
<div class="code" style="left:91px;top:347px;">        {</div>
<div class="ln" style="top:363px;left:11.5px;">51</div>
<div class="code" style="left:91px;top:363px;">            _businessItemService = <span class="p">businessItemService</span>;</div>
<div class="ln" style="top:379px;left:11.5px;">52</div>
<div class="code" style="left:91px;top:379px;">            _documentStoreService = <span class="p">documentStoreService</span>;</div>
<div class="ln" style="top:395px;left:11.5px;">53</div>
<div class="code" style="left:91px;top:395px;">            _meetingService = <span class="p">meetingService</span>;</div>
<div class="ln" style="top:411px;left:11.5px;">54</div>
<div class="code" style="left:91px;top:411px;">            _messageService = <span class="p">messageService</span>;</div>
<div class="ln" style="top:427px;left:11.5px;">55</div>
<div class="code" style="left:91px;top:427px;">            _systemSettingService = <span class="p">systemSettingService</span>;</div>
<div class="ln" style="top:443px;left:11.5px;">56</div>
<div class="code" style="left:91px;top:443px;">            _propertyService = <span class="p">propertyService</span>;</div>
<div class="ln" style="top:459px;left:11.5px;">57</div>
<div class="code" style="left:91px;top:459px;">            _userPropertyRoleService = <span class="p">userPropertyRoleService</span>;</div>
<div class="ln" style="top:475px;left:11.5px;">58</div>
<div class="code" style="left:91px;top:475px;">            _historyService = <span class="p">historyService</span>;</div>
<div class="ln" style="top:491px;left:11.5px;">59</div>
<div class="code" style="left:91px;top:491px;">            _contactService = <span class="p">contactService</span>;</div>
<div class="ln" style="top:507px;left:11.5px;">60</div>
<div class="code" style="left:91px;top:507px;">            _voteService = <span class="p">voteService</span>;</div>
<div class="ln" style="top:523px;left:11.5px;">61</div>
<div class="code" style="left:91px;top:523px;">            _contactLocationObjectRoleService = <span class="p">contactLocationObjectRoleService</span>;</div>
<div class="ln" style="top:539px;left:11.5px;">62</div>
<div class="code" style="left:91px;top:539px;">            _resourceFactory = <span class="p">resourceFactory</span>;</div>
<div class="ln" style="top:555px;left:11.5px;">63</div>
<div class="code" style="left:91px;top:555px;">            _businessItemFollowerService = <span class="p">businessItemFollowerService</span>;</div>
<div class="ln" style="top:571px;left:11.5px;">64</div>
<div class="code" style="left:91px;top:571px;">        }</div>
<div class="ln" style="top:600px;left:11.5px;">65</div>
<div class="code" style="left:91px;top:600px;">        <span class="k">public</span> <span class="k">async</span> <span class="t">Task</span>&lt;<span class="t">ActionResult</span>&gt; <span class="m">Index</span>(<span class="k">string</span> <span class="u">property</span>, <span class="k">long</span> <span class="p">id</span>)</div>
<div class="ln" style="top:616px;left:11.5px;">66</div>
<div class="code" style="left:91px;top:616px;">        {</div>
<div class="ln" style="top:632px;left:11.5px;">67</div>
<div class="code" style="left:91px;top:632px;">            <span class="k">using</span> (<span class="k">new</span> <span class="t">EntityChangeNotifier</span>&lt;<span class="t">MeetingEntity</span>, <span class="t">KwmcContext</span>&gt;(<span class="p">x</span> =&gt; <span class="p">x</span>.Id == <span class="p">id</span>,</div>
<div class="ln" style="top:648px;left:11.5px;">68</div>
<div class="code" style="left:91px;top:648px;">                () =&gt; <span class="k">new</span> <span class="t">KwmcContext</span>(<span class="t">ConfigurationManager</span>.ConnectionStrings[<span class="s">"KWMCConnection"</span>].ConnectionString, <span class="s">"dbo"</span>,</div>
<div class="ln" style="top:664px;left:11.5px;">69</div>
<div class="code" style="left:91px;top:664px;">                    <span class="t">KwmcUnitOfWork</span>.UserSchemaNameParameter, <span class="t">KwmcUnitOfWork</span>.FileTableNameParameter),</div>
<div class="ln" style="top:680px;left:11.5px;">70</div>
<div class="code" style="left:91px;top:680px;">                () =&gt;</div>
<div class="ln" style="top:696px;left:11.5px;">71</div>
<div class="code" style="left:91px;top:696px;">                {</div>
<div class="ln" style="top:712px;left:11.5px;">72</div>
<div class="code" style="left:91px;top:712px;">                    <span class="h">MeetingNotificationHub</span>.<span class="m">NotificationUpdateMeetingStatusStatic</span>(<span class="p">id</span>);</div>
<div class="ln" style="top:728px;left:11.5px;">73</div>
<div class="code" style="left:91px;top:728px;">                    <span class="c">return</span> <span class="k">true</span>;</div>
<div class="ln" style="top:744px;left:11.5px;">74</div>
<div class="code" style="left:91px;top:744px;">                }))</div>
<div class="ln" style="top:760px;left:11.5px;">75</div>
<div class="code" style="left:91px;top:760px;">            {</div>
<div class="ln" style="top:777px;left:11.5px;">76</div>
<div style="left:463px;top:613px;width:1px;height:1px;background:#9a9a9a;"></div>
<div style="left:466px;top:613px;width:1px;height:1px;background:#9a9a9a;"></div>
<div style="left:469px;top:613px;width:1px;height:1px;background:#9a9a9a;"></div>
<div style="left:472px;top:613px;width:1px;height:1px;background:#9a9a9a;"></div>
<div style="top:17.0px;line-height:13px;font-size:10px;color:#999999;white-space:pre;left:119px;letter-spacing:0.219px;">1 reference</div>
<div style="top:270.0px;line-height:13px;font-size:10px;color:#999999;white-space:pre;left:147px;letter-spacing:0.243px;">0 references</div>
<div style="top:587.0px;line-height:13px;font-size:10px;color:#999999;white-space:pre;left:147px;letter-spacing:0.243px;">0 references</div>
</div>
<div style="top:127.0px;line-height:16px;font-size:12px;color:#1e1e1e;white-space:pre;left:11px;letter-spacing:0.048px;">DetailController.cs*</div>
<svg style="left:123px;top:130px;" width="9" height="9" viewBox="0 0 9 9"><path d="M0 4.500h3.500M3.500 1.500v6M3.500 2.500h4v4h-4M3.500 5.500h4" fill="none" stroke="#3a3320" stroke-width="1"/></svg>
<svg style="left:141px;top:130px;" width="9" height="9" viewBox="0 0 9 9"><path d="M.5.500l8 8M8.500.500l-8 8" stroke="#3a3320" stroke-width="1.300"/></svg>
<div style="top:125.5px;line-height:16px;font-size:12px;color:#ffffff;white-space:pre;left:161px;letter-spacing:0.055px;">EntityChangeNotifier.cs</div>
<svg style="left:1620px;top:132px" width="8" height="4" viewBox="0 0 8 4"><path d="M0 0h8L4.0 4z" fill="#D8DDF0"/></svg>
<svg style="left:1636px;top:127.5px;" width="12" height="12" viewBox="0 0 12 12"><circle cx="6" cy="6" r="3" fill="none" stroke="#E3E7F5" stroke-width="1.600"/><path d="M6 .500v11M.500 6h11M2.100 2.100l7.800 7.800M9.900 2.100 2.100 9.900" stroke="#E3E7F5" stroke-width="1.300"/><circle cx="6" cy="6" r="1.600" fill="#5D6B99"/></svg>
<div style="left:546px;top:145px;width:3px;height:22px;background:#9DADD9;"></div>
<div style="left:1087px;top:145px;width:3px;height:22px;background:#9DADD9;"></div>
<div style="left:1629px;top:145px;width:1px;height:22px;background:#9DADD9;"></div>
<svg style="left:10px;top:147.5px;" width="16" height="15" viewBox="0 0 16 15"><path d="M.800.800h14.400v12.400H.800z" fill="#E9E9EE" stroke="#555E9E" stroke-width="1.100"/><path d="M2.800 4.300h10.500v7.200H2.800z" fill="#6767A2"/><circle cx="5.500" cy="10" r="4.500" fill="#B7E3AA" stroke="#7CC27A" stroke-width=".8"/><path d="M1.200 10h8.600M5.500 5.700v8.600M3.300 6.300v7.400M7.700 6.300v7.400M1.800 7.900h7.400M1.800 12.100h7.400" stroke="#5FA95F" stroke-width=".7"/></svg>
<div style="top:147.5px;line-height:16px;font-size:12px;color:#1e1e1e;white-space:pre;left:29px;letter-spacing:-0.113px;">KWMissionControl.WebUI</div>
<svg style="left:537.0px;top:154.75px" width="6" height="3.5" viewBox="0 0 6 3.5"><path d="M0 0h6l-3.0 3.5z" fill="#1e1e1e"/></svg>
<svg style="left:552px;top:147px;" width="17" height="16" viewBox="0 0 17 16"><path d="M7 6.500 12.500 8.500M7 7 9.500 12" stroke="#6A6A6A" stroke-width="1"/><path d="M5.500.700 10 4.700 5.500 8.700 1 4.700z" fill="#F2CB8A" stroke="#6F6A60" stroke-width="1" stroke-linejoin="round"/><path d="M12.700 5.300 16 8.300 12.700 11.300 9.400 8.300z" fill="#F2CB8A" stroke="#6F6A60" stroke-width="1" stroke-linejoin="round"/><path d="M9.700 9.300 13 12.300 9.700 15.300 6.400 12.300z" fill="#F2CB8A" stroke="#6F6A60" stroke-width="1" stroke-linejoin="round"/></svg>
<div style="top:147.5px;line-height:16px;font-size:12px;color:#1e1e1e;white-space:pre;left:570px;letter-spacing:-0.055px;">KWMissionControl.WebUI.Areas.Meeting.Controllers.DetailController</div>
<svg style="left:1078.0px;top:154.75px" width="6" height="3.5" viewBox="0 0 6 3.5"><path d="M0 0h6l-3.0 3.5z" fill="#1e1e1e"/></svg>
<svg style="left:1093px;top:149px;" width="12" height="13" viewBox="0 0 12 13"><path d="M6 .600 11.400 3.400v6L6 12.400.6 9.600v-6z" fill="#CDB8E6" stroke="#7A4AA0" stroke-width="1"/><path d="M.8 3.500 6 6.200l5.200-2.700M6 6.200v6" fill="none" stroke="#7A4AA0" stroke-width=".9"/></svg>
<div style="top:147.5px;line-height:16px;font-size:12px;color:#1e1e1e;white-space:pre;left:1111px;letter-spacing:0.091px;">Index(string property, long id)</div>
<svg style="left:1619.0px;top:154.75px" width="6" height="3.5" viewBox="0 0 6 3.5"><path d="M0 0h6l-3.0 3.5z" fill="#1e1e1e"/></svg>
<svg style="left:1633px;top:149px;" width="11" height="14" viewBox="0 0 11 14"><path d="M0 5h11v1H0zM0 8h11v1H0z" fill="#222" shape-rendering="crispEdges"/><path d="M5 1h1v4H5zM5 9h1v4H5z" fill="#222" shape-rendering="crispEdges"/><path d="M3 3 5.500.300 8 3zM3 11l2.500 2.700L8 11z" fill="#222"/></svg>
<svg style="left:1634px;top:173px" width="9" height="5" viewBox="0 0 9 5"><path d="M0 5L4.5 0 9 5z" fill="#868999"/></svg>
<svg style="left:1634px;top:938px" width="9" height="5" viewBox="0 0 9 5"><path d="M0 0h9L4.5 5z" fill="#868999"/></svg>
<div style="left:1633px;top:214px;width:11px;height:47px;background:#C2C3C9;"></div>
<div style="left:1630px;top:227px;width:5px;height:5px;background:#FFEE62;"></div>
<div style="left:1630px;top:247px;width:5px;height:5px;background:#FFEE62;"></div>
<div style="left:1642px;top:246px;width:5px;height:6px;background:#ACACAC;"></div>
<div style="left:1642px;top:334px;width:5px;height:6px;background:#ACACAC;"></div>
<div style="left:1642px;top:357px;width:5px;height:6px;background:#0A8A0A;"></div>
<div style="left:1642px;top:388px;width:5px;height:6px;background:#0A8A0A;"></div>
<div style="left:1642px;top:427px;width:5px;height:6px;background:#ACACAC;"></div>
<div style="left:1642px;top:505px;width:5px;height:6px;background:#ACACAC;"></div>
<div style="left:1629px;top:255px;width:19px;height:2px;background:#0000CD;"></div>
<div style="left:8px;top:950px;width:58px;height:16px;background:#ffffff;border:1px solid #B7C3E6;"></div>
<div style="top:950.5px;line-height:16px;font-size:12px;color:#1e1e1e;white-space:pre;left:9.5px;letter-spacing:-0.805px;">100 %</div>
<svg style="left:58.0px;top:957.75px" width="6" height="3.5" viewBox="0 0 6 3.5"><path d="M0 0h6l-3.0 3.5z" fill="#1e1e1e"/></svg>
<svg style="left:95px;top:954px;" width="9.5" height="9.5" viewBox="0 0 11 11"><circle cx="5.500" cy="5.500" r="5.300" fill="#E51400"/><path d="M3.200 3.200l4.600 4.600M7.800 3.200 3.200 7.800" stroke="#fff" stroke-width="1.700"/></svg>
<div style="top:950.5px;line-height:16px;font-size:12px;color:#1e1e1e;white-space:pre;left:109px;">0</div>
<svg style="left:141px;top:953.5px;" width="10" height="9" viewBox="0 0 12 11"><path d="M6 .500 11.600 10.500H.4z" fill="#FFCC00" stroke="#E0A800" stroke-width=".6"/><path d="M6 4v3.500" stroke="#222" stroke-width="1.300"/><circle cx="6" cy="9" r=".8" fill="#222"/></svg>
<div style="top:950.5px;line-height:16px;font-size:12px;color:#1e1e1e;white-space:pre;left:155px;">2</div>
<svg style="left:193px;top:953px;" width="14" height="11" viewBox="0 0 14 11"><path d="M13 5.500H1.500M6 1 1.500 5.500 6 10" fill="none" stroke="#005A9E" stroke-width="1.600"/></svg>
<svg style="left:222px;top:953px;" width="14" height="11" viewBox="0 0 14 11"><path d="M1 5.500h11.500M8 1l4.500 4.500L8 10" fill="none" stroke="#005A9E" stroke-width="1.600"/></svg>
<div style="left:249px;top:952px;width:1px;height:13px;background:#B0B0B8;"></div>
<svg style="left:264px;top:952px;" width="13" height="13" viewBox="0 0 13 13"><path d="M2 7.500 8 3l3 4-6 4.500z" fill="none" stroke="#333" stroke-width="1.200"/><path d="M9.500 4.500 12 1" stroke="#333" stroke-width="1.600"/><path d="M4 9l1.500 2M6 7.500l1.500 2" stroke="#333" stroke-width=".8"/></svg>
<svg style="left:282.0px;top:957.75px" width="6" height="3.5" viewBox="0 0 6 3.5"><path d="M0 0h6l-3.0 3.5z" fill="#1e1e1e"/></svg>
<svg style="left:317px;top:955px" width="5" height="8" viewBox="0 0 5 8"><path d="M5 0v8L0 4.0z" fill="#868999"/></svg>
<div style="left:329px;top:954px;width:774px;height:9px;background:#C2C3C9;"></div>
<svg style="left:1455px;top:955px" width="5" height="8" viewBox="0 0 5 8"><path d="M0 0v8L5 4.0z" fill="#868999"/></svg>
<div style="top:950.5px;line-height:16px;font-size:12px;color:#1e1e1e;white-space:pre;left:1489px;letter-spacing:-0.561px;">Ln: 72</div>
<div style="top:950.5px;line-height:16px;font-size:12px;color:#1e1e1e;white-space:pre;left:1537px;letter-spacing:-0.559px;">Ch: 37</div>
<div style="top:950.5px;line-height:16px;font-size:12px;color:#1e1e1e;white-space:pre;left:1588px;letter-spacing:-1.558px;">SPC</div>
<div style="top:950.5px;line-height:16px;font-size:12px;color:#1e1e1e;white-space:pre;left:1627px;letter-spacing:-1.502px;">LF</div>
<div style="left:1656px;top:125px;width:257px;height:21px;background:#40568D;"></div>
<div style="top:127.5px;line-height:16px;font-size:12px;color:#ffffff;white-space:pre;left:1660px;letter-spacing:-0.082px;">Solution Explorer</div>
<svg style="left:1865px;top:133.5px" width="8" height="4" viewBox="0 0 8 4"><path d="M0 0h8L4.0 4z" fill="#C9D0EA"/></svg>
<svg style="left:1881px;top:129.5px;" width="9" height="12" viewBox="0 0 9 12"><path d="M2.500.500h4M3 .500v6M6 .500v6M.500 6.500h8M4.500 6.500v5" fill="none" stroke="#C9D0EA" stroke-width="1.100"/></svg>
<svg style="left:1898px;top:131.0px;" width="9" height="9" viewBox="0 0 9 9"><path d="M.500.500l8 8M8.500.500l-8 8" stroke="#C9D0EA" stroke-width="1.300"/></svg>
<div style="left:1656px;top:146px;width:257px;height:29px;background:#CCD5F0;"></div>
<svg style="left:1664.5px;top:153.5px;" width="13" height="13" viewBox="0 0 13 13"><circle cx="6.500" cy="6.500" r="6" fill="#ABB2CB"/><path d="M10 6.500H3.800M6.300 3.800 3.500 6.500l2.800 2.700" fill="none" stroke="#CCD5F0" stroke-width="1.600"/></svg>
<svg style="left:1686.5px;top:153.5px;" width="13" height="13" viewBox="0 0 13 13"><circle cx="6.500" cy="6.500" r="6" fill="#ABB2CB"/><path d="M3 6.500h6.200M6.700 3.800 9.500 6.500 6.700 9.200" fill="none" stroke="#CCD5F0" stroke-width="1.600"/></svg>
<svg style="left:1707.5px;top:152.5px;" width="15" height="15" viewBox="0 0 15 15"><path d="M2.800 7.500V14h9.400V7.500L7.500 2.500z" fill="#DADCF2"/><path d="M.800 8.200 7.500 1.500 14.200 8.200" fill="none" stroke="#333" stroke-width="1.400"/><path d="M2.800 7.500V14h9.400V7.500" fill="none" stroke="#333" stroke-width="1.300"/><path d="M5.800 9h3.400V14H5.800z" fill="#333"/><path d="M11 1.200v3.300" stroke="#333" stroke-width="1.200"/></svg>
<svg style="left:1729.5px;top:152.5px;" width="15" height="15" viewBox="0 0 15 15"><path d="M6 .600h8.400v12H6z" fill="#EEF0FA" stroke="#333" stroke-width="1.100"/><path d="M6 .600h8.400v2.200H6z" fill="#333"/><path d="M8.500 5h1M10.500 5h2.800M8.500 7.300h1M10.500 7.300h2.800M10 9.600h3.300" stroke="#333" stroke-width="1"/><path d="M6.300 6.800 8.300 7.600v6.600l-2 .800-3.400-3.200L1.300 13 .5 12.600V9.200l.8-.4 1.600 1.200zM1.500 9.900v2L2.600 10.900zM4.400 10.900l2 1.600V9.300z" fill="#7A2FC9"/></svg>
<div style="left:1751px;top:150px;width:1px;height:20px;background:#8E9BBC;"></div>
<svg style="left:1761.5px;top:152.5px;" width="14" height="15" viewBox="0 0 14 15"><circle cx="8.200" cy="9.400" r="4.700" fill="#DADCF2" stroke="#333" stroke-width="1.300"/><path d="M8.200 6.500v3.200h2.600" fill="none" stroke="#333" stroke-width="1.100"/><path d="M.500.800h4.600L2.800 3.200z" fill="#333"/><path d="M2.800 2.500v2.800" stroke="#333" stroke-width="1.100"/></svg>
<svg style="left:1782.0px;top:159.75px" width="6" height="3.5" viewBox="0 0 6 3.5"><path d="M0 0h6l-3.0 3.5z" fill="#1e1e1e"/></svg>
<svg style="left:1795px;top:152.7px;" width="15" height="15" viewBox="0 0 15 15"><path d="M2 6.500A5.500 5.500 0 0 1 12 4M13 8.500A5.500 5.500 0 0 1 3 11" fill="none" stroke="#00539C" stroke-width="2.200"/><path d="M14 .500v5.500H8.500zM1 14.500V9h5.500z" fill="#00539C"/></svg>
<svg style="left:1817.5px;top:153.5px;" width="13" height="14" viewBox="0 0 13 14"><path d="M10.300 4.500A5 5 0 1 0 11.500 8.500" fill="none" stroke="#ABB2CB" stroke-width="2.100"/><path d="M7 .200v5.600l4.600-2.400z" fill="#ABB2CB"/></svg>
<svg style="left:1840.5px;top:153.5px;" width="12" height="12" viewBox="0 0 12 12"><path d="M2.500 4.500v-2h7v7h-2M4.500 2.500v-2h7v7h-2" fill="none" stroke="#333" stroke-width="1.100"/><path d="M.500 4.500h7v7h-7z" fill="#DADCF2" stroke="#333" stroke-width="1.100"/><path d="M2.300 8h3.400" stroke="#00539C" stroke-width="1.300"/></svg>
<svg style="left:1860.5px;top:152.5px;" width="15" height="15" viewBox="0 0 15 15"><path d="M3.200.600H.600v9.600h1.800" fill="none" stroke="#333" stroke-width="1.100"/><path d="M3.500 2.500h6l2.700 2.700v9.200H3.500z" fill="#DADCF2" stroke="#333" stroke-width="1.200"/><path d="M5.500 7.500h4.800M5.500 9.700h4.800M5.500 11.900h3.300" stroke="#333" stroke-width="1"/><path d="M12 2.500h.8l1.600 1.600v7.500h-1.600" fill="none" stroke="#333" stroke-width="1.100"/></svg>
<div style="left:1882px;top:150px;width:1px;height:20px;background:#8E9BBC;"></div>
<svg style="left:1904.5px;top:150.5px;" width="7" height="4" viewBox="0 0 7 4"><path d="M0 0v3.600L2.500 1.800zM3.800 0v3.600L6.300 1.800z" fill="#222"/></svg>
<div style="left:1656px;top:175px;width:257px;height:22px;background:#CCD5F0;"></div>
<div style="left:1657px;top:175px;width:255px;height:20px;background:#FCFCFF;border:1px solid #DADFF0;"></div>
<div style="top:176.5px;line-height:16px;font-size:12px;color:#6d6d6d;white-space:pre;left:1661px;letter-spacing:-0.154px;">Search Solution Explorer (Ctrl+;)</div>
<svg style="left:1884px;top:178px;" width="14" height="14" viewBox="0 0 14 14"><circle cx="8.800" cy="5.200" r="3.400" fill="none" stroke="#3b3f52" stroke-width="1.700"/><path d="M6.300 7.700 1.500 12.500" stroke="#3b3f52" stroke-width="2.200" stroke-linecap="round"/></svg>
<svg style="left:1902.5px;top:184.0px" width="5" height="3.0" viewBox="0 0 5 3.0"><path d="M0 0h5l-2.5 3.0z" fill="#3b3f52"/></svg>
<div style="left:1656px;top:197px;width:257px;height:735px;background:#F5F7FD;"></div>
<div style="left:1896px;top:197px;width:17px;height:735px;background:#E8E8EC;"></div>
<svg style="left:1900px;top:204px" width="9" height="5" viewBox="0 0 9 5"><path d="M0 5L4.5 0 9 5z" fill="#868999"/></svg>
<svg style="left:1900px;top:921px" width="9" height="5" viewBox="0 0 9 5"><path d="M0 0h9L4.5 5z" fill="#868999"/></svg>
<div style="left:1900px;top:300px;width:9px;height:57px;background:#C2C3C9;"></div>
<div style="left:1656px;top:197px;width:240px;height:735px;overflow:hidden;">
<div style="left:0;top:720px;width:240px;height:18px;background:#E6E7EF;"></div>
<div style="left:69px;top:8px;width:4px;height:4px;background:#424242;"></div>
<div style="left:74px;top:9.5px;width:2px;height:1px;background:#424242;"></div>
<div style="left:77px;top:7px;width:6px;height:7px;background:#424242;"></div>
<div style="top:2.0px;line-height:16px;font-size:12px;color:#1e1e1e;white-space:pre;left:89px;letter-spacing:-0.039px;">MvcSiteMapProvider</div>
<div style="left:69px;top:26px;width:4px;height:4px;background:#424242;"></div>
<div style="left:74px;top:27.5px;width:2px;height:1px;background:#424242;"></div>
<div style="left:77px;top:25px;width:6px;height:7px;background:#424242;"></div>
<div style="top:20.0px;line-height:16px;font-size:12px;color:#1e1e1e;white-space:pre;left:89px;letter-spacing:-0.027px;">MvcSiteMapProvider.WebActivator</div>
<div style="left:69px;top:44px;width:4px;height:4px;background:#424242;"></div>
<div style="left:74px;top:45.5px;width:2px;height:1px;background:#424242;"></div>
<div style="left:77px;top:43px;width:6px;height:7px;background:#424242;"></div>
<div style="top:38.0px;line-height:16px;font-size:12px;color:#1e1e1e;white-space:pre;left:89px;letter-spacing:-0.114px;">Newtonsoft.Json</div>
<div style="left:69px;top:62px;width:4px;height:4px;background:#424242;"></div>
<div style="left:74px;top:63.5px;width:2px;height:1px;background:#424242;"></div>
<div style="left:77px;top:61px;width:6px;height:7px;background:#424242;"></div>
<div style="top:56.0px;line-height:16px;font-size:12px;color:#1e1e1e;white-space:pre;left:89px;letter-spacing:-0.085px;">Owin</div>
<div style="left:69px;top:80px;width:4px;height:4px;background:#424242;"></div>
<div style="left:74px;top:81.5px;width:2px;height:1px;background:#424242;"></div>
<div style="left:77px;top:79px;width:6px;height:7px;background:#424242;"></div>
<div style="top:74.0px;line-height:16px;font-size:12px;color:#1e1e1e;white-space:pre;left:89px;letter-spacing:-0.263px;">reCaptcha</div>
<div style="left:69px;top:98px;width:4px;height:4px;background:#424242;"></div>
<div style="left:74px;top:99.5px;width:2px;height:1px;background:#424242;"></div>
<div style="left:77px;top:97px;width:6px;height:7px;background:#424242;"></div>
<div style="top:92.0px;line-height:16px;font-size:12px;color:#1e1e1e;white-space:pre;left:89px;letter-spacing:-0.127px;">Select.HtmlToPdf</div>
<div style="left:69px;top:116px;width:4px;height:4px;background:#424242;"></div>
<div style="left:74px;top:117.5px;width:2px;height:1px;background:#424242;"></div>
<div style="left:77px;top:115px;width:6px;height:7px;background:#424242;"></div>
<div style="top:110.0px;line-height:16px;font-size:12px;color:#1e1e1e;white-space:pre;left:89px;letter-spacing:-0.501px;">System</div>
<div style="left:69px;top:134px;width:4px;height:4px;background:#424242;"></div>
<div style="left:74px;top:135.5px;width:2px;height:1px;background:#424242;"></div>
<div style="left:77px;top:133px;width:6px;height:7px;background:#424242;"></div>
<div style="top:128.0px;line-height:16px;font-size:12px;color:#1e1e1e;white-space:pre;left:89px;letter-spacing:-0.012px;">System.ComponentModel.DataAnnotations</div>
<div style="left:69px;top:152px;width:4px;height:4px;background:#424242;"></div>
<div style="left:74px;top:153.5px;width:2px;height:1px;background:#424242;"></div>
<div style="left:77px;top:151px;width:6px;height:7px;background:#424242;"></div>
<div style="top:146.0px;line-height:16px;font-size:12px;color:#1e1e1e;white-space:pre;left:89px;letter-spacing:-0.036px;">System.Configuration</div>
<div style="left:69px;top:170px;width:4px;height:4px;background:#424242;"></div>
<div style="left:74px;top:171.5px;width:2px;height:1px;background:#424242;"></div>
<div style="left:77px;top:169px;width:6px;height:7px;background:#424242;"></div>
<div style="top:164.0px;line-height:16px;font-size:12px;color:#1e1e1e;white-space:pre;left:89px;letter-spacing:-0.426px;">System.Data</div>
<div style="left:69px;top:188px;width:4px;height:4px;background:#424242;"></div>
<div style="left:74px;top:189.5px;width:2px;height:1px;background:#424242;"></div>
<div style="left:77px;top:187px;width:6px;height:7px;background:#424242;"></div>
<div style="top:182.0px;line-height:16px;font-size:12px;color:#1e1e1e;white-space:pre;left:89px;letter-spacing:-0.240px;">System.Drawing</div>
<div style="left:69px;top:206px;width:4px;height:4px;background:#424242;"></div>
<div style="left:74px;top:207.5px;width:2px;height:1px;background:#424242;"></div>
<div style="left:77px;top:205px;width:6px;height:7px;background:#424242;"></div>
<div style="top:200.0px;line-height:16px;font-size:12px;color:#1e1e1e;white-space:pre;left:89px;letter-spacing:-0.402px;">System.EnterpriseServices</div>
<div style="left:69px;top:224px;width:4px;height:4px;background:#424242;"></div>
<div style="left:74px;top:225.5px;width:2px;height:1px;background:#424242;"></div>
<div style="left:77px;top:223px;width:6px;height:7px;background:#424242;"></div>
<div style="top:218.0px;line-height:16px;font-size:12px;color:#1e1e1e;white-space:pre;left:89px;letter-spacing:-0.091px;">System.Net.Http</div>
<div style="left:69px;top:242px;width:4px;height:4px;background:#424242;"></div>
<div style="left:74px;top:243.5px;width:2px;height:1px;background:#424242;"></div>
<div style="left:77px;top:241px;width:6px;height:7px;background:#424242;"></div>
<div style="top:236.0px;line-height:16px;font-size:12px;color:#1e1e1e;white-space:pre;left:89px;letter-spacing:-0.002px;">System.Net.Http.Formatting</div>
<div style="left:69px;top:260px;width:4px;height:4px;background:#424242;"></div>
<div style="left:74px;top:261.5px;width:2px;height:1px;background:#424242;"></div>
<div style="left:77px;top:259px;width:6px;height:7px;background:#424242;"></div>
<div style="top:254.0px;line-height:16px;font-size:12px;color:#1e1e1e;white-space:pre;left:89px;letter-spacing:-0.196px;">System.Net.Http.WebRequest</div>
<div style="left:69px;top:278px;width:4px;height:4px;background:#424242;"></div>
<div style="left:74px;top:279.5px;width:2px;height:1px;background:#424242;"></div>
<div style="left:77px;top:277px;width:6px;height:7px;background:#424242;"></div>
<div style="top:272.0px;line-height:16px;font-size:12px;color:#1e1e1e;white-space:pre;left:89px;letter-spacing:-0.223px;">System.Runtime.Serialization</div>
<div style="left:69px;top:296px;width:4px;height:4px;background:#424242;"></div>
<div style="left:74px;top:297.5px;width:2px;height:1px;background:#424242;"></div>
<div style="left:77px;top:295px;width:6px;height:7px;background:#424242;"></div>
<div style="top:290.0px;line-height:16px;font-size:12px;color:#1e1e1e;white-space:pre;left:89px;letter-spacing:-0.313px;">System.Security</div>
<div style="left:69px;top:314px;width:4px;height:4px;background:#424242;"></div>
<div style="left:74px;top:315.5px;width:2px;height:1px;background:#424242;"></div>
<div style="left:77px;top:313px;width:6px;height:7px;background:#424242;"></div>
<div style="top:308.0px;line-height:16px;font-size:12px;color:#1e1e1e;white-space:pre;left:89px;letter-spacing:-0.313px;">System.ValueTuple</div>
<div style="left:69px;top:332px;width:4px;height:4px;background:#424242;"></div>
<div style="left:74px;top:333.5px;width:2px;height:1px;background:#424242;"></div>
<div style="left:77px;top:331px;width:6px;height:7px;background:#424242;"></div>
<div style="top:326.0px;line-height:16px;font-size:12px;color:#1e1e1e;white-space:pre;left:89px;letter-spacing:-0.380px;">System.Web</div>
<div style="left:69px;top:350px;width:4px;height:4px;background:#424242;"></div>
<div style="left:74px;top:351.5px;width:2px;height:1px;background:#424242;"></div>
<div style="left:77px;top:349px;width:6px;height:7px;background:#424242;"></div>
<div style="top:344.0px;line-height:16px;font-size:12px;color:#1e1e1e;white-space:pre;left:89px;letter-spacing:-0.135px;">System.Web.ApplicationServices</div>
<div style="left:69px;top:368px;width:4px;height:4px;background:#424242;"></div>
<div style="left:74px;top:369.5px;width:2px;height:1px;background:#424242;"></div>
<div style="left:77px;top:367px;width:6px;height:7px;background:#424242;"></div>
<div style="top:362.0px;line-height:16px;font-size:12px;color:#1e1e1e;white-space:pre;left:89px;letter-spacing:-0.235px;">System.Web.DynamicData</div>
<div style="left:69px;top:386px;width:4px;height:4px;background:#424242;"></div>
<div style="left:74px;top:387.5px;width:2px;height:1px;background:#424242;"></div>
<div style="left:77px;top:385px;width:6px;height:7px;background:#424242;"></div>
<div style="top:380.0px;line-height:16px;font-size:12px;color:#1e1e1e;white-space:pre;left:89px;letter-spacing:-0.244px;">System.Web.Entity</div>
<div style="left:69px;top:404px;width:4px;height:4px;background:#424242;"></div>
<div style="left:74px;top:405.5px;width:2px;height:1px;background:#424242;"></div>
<div style="left:77px;top:403px;width:6px;height:7px;background:#424242;"></div>
<div style="top:398.0px;line-height:16px;font-size:12px;color:#1e1e1e;white-space:pre;left:89px;letter-spacing:-0.305px;">System.Web.Helpers</div>
<div style="left:69px;top:422px;width:4px;height:4px;background:#424242;"></div>
<div style="left:74px;top:423.5px;width:2px;height:1px;background:#424242;"></div>
<div style="left:77px;top:421px;width:6px;height:7px;background:#424242;"></div>
<div style="top:416.0px;line-height:16px;font-size:12px;color:#1e1e1e;white-space:pre;left:89px;letter-spacing:-0.169px;">System.Web.Http</div>
<div style="left:69px;top:440px;width:4px;height:4px;background:#424242;"></div>
<div style="left:74px;top:441.5px;width:2px;height:1px;background:#424242;"></div>
<div style="left:77px;top:439px;width:6px;height:7px;background:#424242;"></div>
<div style="top:434.0px;line-height:16px;font-size:12px;color:#1e1e1e;white-space:pre;left:89px;letter-spacing:-0.091px;">System.Web.Http.Owin</div>
<div style="left:69px;top:458px;width:4px;height:4px;background:#424242;"></div>
<div style="left:74px;top:459.5px;width:2px;height:1px;background:#424242;"></div>
<div style="left:77px;top:457px;width:6px;height:7px;background:#424242;"></div>
<div style="top:452.0px;line-height:16px;font-size:12px;color:#1e1e1e;white-space:pre;left:89px;letter-spacing:-0.087px;">System.Web.Http.WebHost</div>
<div style="left:69px;top:476px;width:4px;height:4px;background:#424242;"></div>
<div style="left:74px;top:477.5px;width:2px;height:1px;background:#424242;"></div>
<div style="left:77px;top:475px;width:6px;height:7px;background:#424242;"></div>
<div style="top:470.0px;line-height:16px;font-size:12px;color:#1e1e1e;white-space:pre;left:89px;letter-spacing:-0.209px;">System.Web.Mvc</div>
<div style="left:69px;top:494px;width:4px;height:4px;background:#424242;"></div>
<div style="left:74px;top:495.5px;width:2px;height:1px;background:#424242;"></div>
<div style="left:77px;top:493px;width:6px;height:7px;background:#424242;"></div>
<div style="top:488.0px;line-height:16px;font-size:12px;color:#1e1e1e;white-space:pre;left:89px;letter-spacing:-0.079px;">System.Web.Optimization</div>
<div style="left:69px;top:512px;width:4px;height:4px;background:#424242;"></div>
<div style="left:74px;top:513.5px;width:2px;height:1px;background:#424242;"></div>
<div style="left:77px;top:511px;width:6px;height:7px;background:#424242;"></div>
<div style="top:506.0px;line-height:16px;font-size:12px;color:#1e1e1e;white-space:pre;left:89px;letter-spacing:-0.434px;">System.Web.Razor</div>
<div style="left:69px;top:530px;width:4px;height:4px;background:#424242;"></div>
<div style="left:74px;top:531.5px;width:2px;height:1px;background:#424242;"></div>
<div style="left:77px;top:529px;width:6px;height:7px;background:#424242;"></div>
<div style="top:524.0px;line-height:16px;font-size:12px;color:#1e1e1e;white-space:pre;left:89px;letter-spacing:-0.408px;">System.Web.Services</div>
<div style="left:69px;top:548px;width:4px;height:4px;background:#424242;"></div>
<div style="left:74px;top:549.5px;width:2px;height:1px;background:#424242;"></div>
<div style="left:77px;top:547px;width:6px;height:7px;background:#424242;"></div>
<div style="top:542.0px;line-height:16px;font-size:12px;color:#1e1e1e;white-space:pre;left:89px;letter-spacing:-0.320px;">System.Web.Webpages</div>
<div style="left:69px;top:566px;width:4px;height:4px;background:#424242;"></div>
<div style="left:74px;top:567.5px;width:2px;height:1px;background:#424242;"></div>
<div style="left:77px;top:565px;width:6px;height:7px;background:#424242;"></div>
<div style="top:560.0px;line-height:16px;font-size:12px;color:#1e1e1e;white-space:pre;left:89px;letter-spacing:-0.279px;">System.Web.Webpages.Deployment</div>
<div style="left:69px;top:584px;width:4px;height:4px;background:#424242;"></div>
<div style="left:74px;top:585.5px;width:2px;height:1px;background:#424242;"></div>
<div style="left:77px;top:583px;width:6px;height:7px;background:#424242;"></div>
<div style="top:578.0px;line-height:16px;font-size:12px;color:#1e1e1e;white-space:pre;left:89px;letter-spacing:-0.376px;">System.Web.Webpages.Razor</div>
<div style="left:69px;top:602px;width:4px;height:4px;background:#424242;"></div>
<div style="left:74px;top:603.5px;width:2px;height:1px;background:#424242;"></div>
<div style="left:77px;top:601px;width:6px;height:7px;background:#424242;"></div>
<div style="top:596.0px;line-height:16px;font-size:12px;color:#1e1e1e;white-space:pre;left:89px;letter-spacing:-0.281px;">System.Xml</div>
<div style="left:69px;top:620px;width:4px;height:4px;background:#424242;"></div>
<div style="left:74px;top:621.5px;width:2px;height:1px;background:#424242;"></div>
<div style="left:77px;top:619px;width:6px;height:7px;background:#424242;"></div>
<div style="top:614.0px;line-height:16px;font-size:12px;color:#1e1e1e;white-space:pre;left:89px;letter-spacing:-0.182px;">WebActivatorEx</div>
<div style="left:69px;top:638px;width:4px;height:4px;background:#424242;"></div>
<div style="left:74px;top:639.5px;width:2px;height:1px;background:#424242;"></div>
<div style="left:77px;top:637px;width:6px;height:7px;background:#424242;"></div>
<div style="top:632.0px;line-height:16px;font-size:12px;color:#1e1e1e;white-space:pre;left:89px;letter-spacing:-0.579px;">WebGrease</div>
<svg style="left:50px;top:651px" width="15" height="13" viewBox="0 0 15 13"><path d="M.500 1.500h5.500l1.300 1.500h7.200v9.500H.500z" fill="#DCB67A"/></svg>
<div style="top:650.0px;line-height:16px;font-size:12px;color:#1e1e1e;white-space:pre;left:71px;letter-spacing:-0.297px;">App_Data</div>
<svg style="left:28px;top:672px" width="7" height="7" viewBox="0 0 7 7"><path d="M7 0v7H0z" fill="#1e1e1e"/></svg>
<svg style="left:50px;top:669px" width="16" height="13" viewBox="0 0 16 13"><path d="M.800 12V1.500h4.700l1.300 1.500h6.700V6" fill="none" stroke="#DCB67A" stroke-width="1.300"/><path d="M3 6h12.500l-2.500 6.500H.800z" fill="#DCB67A"/></svg>
<div style="top:668.0px;line-height:16px;font-size:12px;color:#1e1e1e;white-space:pre;left:71px;letter-spacing:-0.263px;">App_Start</div>
<svg style="left:46px;top:689px" width="7" height="10" viewBox="0 0 7 10"><path d="M.700.900v8.200L6 5z" fill="none" stroke="#1e1e1e" stroke-width="1.100"/></svg>
<svg style="left:59.5px;top:690.5px" width="6" height="7" viewBox="0 0 7 8"><path d="M1.500 3.500V2.200a2 2 0 0 1 4 0v1.300" fill="none" stroke="#1BA1E2" stroke-width="1.100"/><path d="M.500 3.500h6v4.300h-6z" fill="#1BA1E2"/><path d="M2.700 5h1.600v1.400H2.700z" fill="#F5F7FD"/></svg>
<div style="left:71px;top:686.5px;font-size:10px;line-height:16px;font-weight:bold;color:#388A34;letter-spacing:-.6px;">C#</div>
<div style="top:686.0px;line-height:16px;font-size:12px;color:#1e1e1e;white-space:pre;left:89px;letter-spacing:0.101px;">AutofacModule.cs</div>
<svg style="left:46px;top:707px" width="7" height="10" viewBox="0 0 7 10"><path d="M.700.900v8.200L6 5z" fill="none" stroke="#1e1e1e" stroke-width="1.100"/></svg>
<svg style="left:59.5px;top:708.5px" width="6" height="7" viewBox="0 0 7 8"><path d="M1.500 3.500V2.200a2 2 0 0 1 4 0v1.300" fill="none" stroke="#1BA1E2" stroke-width="1.100"/><path d="M.500 3.500h6v4.300h-6z" fill="#1BA1E2"/><path d="M2.700 5h1.600v1.400H2.700z" fill="#F5F7FD"/></svg>
<div style="left:71px;top:704.5px;font-size:10px;line-height:16px;font-weight:bold;color:#388A34;letter-spacing:-.6px;">C#</div>
<div style="top:704.0px;line-height:16px;font-size:12px;color:#1e1e1e;white-space:pre;left:89px;letter-spacing:0.084px;">AutoMapperConfig.cs</div>
<svg style="left:46px;top:725px" width="7" height="10" viewBox="0 0 7 10"><path d="M.700.900v8.200L6 5z" fill="none" stroke="#1e1e1e" stroke-width="1.100"/></svg>
<svg style="left:59.5px;top:726.5px" width="6" height="7" viewBox="0 0 7 8"><path d="M1.500 3.500V2.200a2 2 0 0 1 4 0v1.300" fill="none" stroke="#1BA1E2" stroke-width="1.100"/><path d="M.500 3.500h6v4.300h-6z" fill="#1BA1E2"/><path d="M2.700 5h1.600v1.400H2.700z" fill="#F5F7FD"/></svg>
<div style="left:71px;top:722.5px;font-size:10px;line-height:16px;font-weight:bold;color:#388A34;letter-spacing:-.6px;">C#</div>
<div style="top:722.0px;line-height:16px;font-size:12px;color:#1e1e1e;white-space:pre;left:89px;letter-spacing:-0.219px;">BackgroundJobs.cs</div>
</div>
<div style="left:1656px;top:932px;width:257px;height:17px;background:#E8E8EC;"></div>
<svg style="left:1662px;top:936px" width="5" height="9" viewBox="0 0 5 9"><path d="M5 0v9L0 4.5z" fill="#868999"/></svg>
<svg style="left:1885px;top:936px" width="5" height="9" viewBox="0 0 5 9"><path d="M0 0v9L5 4.5z" fill="#868999"/></svg>
<div style="left:1673px;top:936px;width:154px;height:9px;background:#C2C3C9;"></div>
<div style="left:1656px;top:949px;width:100px;height:20px;background:#F5F7FD;"></div>
<div style="top:950.5px;line-height:16px;font-size:12px;color:#1e1e1e;white-space:pre;left:1661px;letter-spacing:-0.140px;">Solution Explorer</div>
<div style="left:1757px;top:950px;width:75px;height:18px;background:#40568D;"></div>
<div style="top:950.5px;line-height:16px;font-size:12px;color:#ffffff;white-space:pre;left:1763px;letter-spacing:-0.246px;">Git Changes</div>
<div style="left:1656px;top:977px;width:257px;height:20px;background:#40568D;"></div>
<div style="top:980.0px;line-height:16px;font-size:12px;color:#ffffff;white-space:pre;left:1661px;letter-spacing:-0.169px;">Properties</div>
<svg style="left:1865px;top:985.0px" width="8" height="4" viewBox="0 0 8 4"><path d="M0 0h8L4.0 4z" fill="#C9D0EA"/></svg>
<svg style="left:1881px;top:981.0px;" width="9" height="12" viewBox="0 0 9 12"><path d="M2.500.500h4M3 .500v6M6 .500v6M.500 6.500h8M4.500 6.500v5" fill="none" stroke="#C9D0EA" stroke-width="1.100"/></svg>
<svg style="left:1898px;top:982.5px;" width="9" height="9" viewBox="0 0 9 9"><path d="M.500.500l8 8M8.500.500l-8 8" stroke="#C9D0EA" stroke-width="1.300"/></svg>
<div style="left:1656px;top:997px;width:257px;height:13px;background:#FCFCFF;"></div>
<div style="left:1906px;top:1008px;width:5px;height:2px;background:#222;"></div>
<div style="left:7px;top:975px;width:1641px;height:15px;background:#40568D;"></div>
<div style="top:978.5px;line-height:16px;font-size:12px;color:#ffffff;white-space:pre;left:11.5px;letter-spacing:-0.020px;">'EntityChangeNotifier' references</div>
<svg style="left:1601px;top:984px" width="8" height="4" viewBox="0 0 8 4"><path d="M0 0h8L4.0 4z" fill="#C9D0EA"/></svg>
<svg style="left:1616px;top:980px;" width="9" height="10" viewBox="0 0 9 10"><path d="M2.500.500h4M3 .500v6M6 .500v6M.500 6.500h8M4.500 6.500v3.500" fill="none" stroke="#C9D0EA" stroke-width="1.100"/></svg>
<svg style="left:1633px;top:981px;" width="9" height="9" viewBox="0 0 9 9"><path d="M.500.500l8 8M8.500.500l-8 8" stroke="#C9D0EA" stroke-width="1.300"/></svg>
<div style="left:7px;top:990px;width:184px;height:20px;background:#FCFCFF;"></div>
<div style="top:991.5px;line-height:16px;font-size:12px;color:#1e1e1e;white-space:pre;left:12.5px;letter-spacing:-0.020px;">'EntityChangeNotifier' references</div>
<div style="left:193px;top:990px;width:150px;height:19px;background:#40568D;"></div>
<div style="top:991.5px;line-height:16px;font-size:12px;color:#E3E8F7;white-space:pre;left:198px;letter-spacing:-0.207px;">Package Manager Console</div>
<div style="left:345px;top:990px;width:67px;height:19px;background:#40568D;"></div>
<div style="top:991.5px;line-height:16px;font-size:12px;color:#E3E8F7;white-space:pre;left:350px;letter-spacing:-0.221px;">Find "SQL"</div>
<div style="left:414px;top:990px;width:43px;height:19px;background:#40568D;"></div>
<div style="top:991.5px;line-height:16px;font-size:12px;color:#E3E8F7;white-space:pre;left:419px;letter-spacing:-0.281px;">Locals</div>
<div style="left:459px;top:990px;width:53px;height:19px;background:#40568D;"></div>
<div style="top:991.5px;line-height:16px;font-size:12px;color:#E3E8F7;white-space:pre;left:464px;letter-spacing:-0.081px;">Watch 1</div>
<div style="left:514px;top:990px;width:40px;height:19px;background:#40568D;"></div>
<div style="top:991.5px;line-height:16px;font-size:12px;color:#E3E8F7;white-space:pre;left:519px;letter-spacing:0.063px;">Autos</div>
<div style="left:557px;top:990px;width:61px;height:19px;background:#40568D;"></div>
<div style="top:991.5px;line-height:16px;font-size:12px;color:#E3E8F7;white-space:pre;left:562px;letter-spacing:-0.302px;">Call Stack</div>
<div style="left:620px;top:990px;width:72px;height:19px;background:#40568D;"></div>
<div style="top:991.5px;line-height:16px;font-size:12px;color:#E3E8F7;white-space:pre;left:625px;letter-spacing:-0.125px;">Breakpoints</div>
<div style="left:694px;top:990px;width:108px;height:19px;background:#40568D;"></div>
<div style="top:991.5px;line-height:16px;font-size:12px;color:#E3E8F7;white-space:pre;left:699px;letter-spacing:-0.133px;">Exception Settings</div>
<div style="left:804px;top:990px;width:113px;height:19px;background:#40568D;"></div>
<div style="top:991.5px;line-height:16px;font-size:12px;color:#E3E8F7;white-space:pre;left:808px;letter-spacing:0.188px;">Command Window</div>
<div style="left:919px;top:990px;width:48px;height:19px;background:#40568D;"></div>
<div style="top:991.5px;line-height:16px;font-size:12px;color:#E3E8F7;white-space:pre;left:924px;letter-spacing:0.329px;">Output</div>
<svg style="left:4px;top:1023.5px;" width="17" height="12" viewBox="0 0 17 12"><path d="M4 1h12l-3 10H1z" fill="none" stroke="#fff" stroke-width="1.300"/></svg>
<div style="top:1020.5px;line-height:16px;font-size:12px;color:#ffffff;white-space:pre;left:28px;letter-spacing:-0.538px;">Ready</div>
<svg style="left:1582px;top:1023px;" width="10" height="11" viewBox="0 0 10 11"><path d="M5 11V1.500M1 5.200 5 1.200l4 4" fill="none" stroke="#ffffff" stroke-width="1.500"/></svg>
<div style="top:1020.5px;line-height:16px;font-size:12px;color:#ffffff;white-space:pre;left:1600px;">2</div>
<svg style="left:1613px;top:1026px" width="8" height="4" viewBox="0 0 8 4"><path d="M0 4L4.0 0 8 4z" fill="#ffffff"/></svg>
<svg style="left:1644px;top:1022px;" width="13" height="13" viewBox="0 0 13 13"><path d="M1 12l.8-3.300L9.300 1.200l2.500 2.500-7.500 7.500z" fill="#E8D5D2"/><path d="M8 2.500l2.500 2.500" stroke="#A54C42" stroke-width=".8"/></svg>
<div style="top:1020.5px;line-height:16px;font-size:12px;color:#ffffff;white-space:pre;left:1665px;">7</div>
<svg style="left:1693px;top:1021px;" width="16" height="16" viewBox="0 0 16 16"><path d="M8 .500 15.500 8 8 15.500.500 8z" fill="#EBD9D6"/><path d="M6 4l4 4M8 6v5" stroke="#A54C42" stroke-width="1.200"/><circle cx="8" cy="11" r="1.200" fill="#A54C42"/><circle cx="10.500" cy="8.500" r="1.200" fill="#A54C42"/><circle cx="6.200" cy="4.200" r="1.200" fill="#A54C42"/></svg>
<div style="top:1020.5px;line-height:16px;font-size:12px;color:#ffffff;white-space:pre;left:1715px;letter-spacing:0.084px;">kwmc</div>
<svg style="left:1752px;top:1026px" width="8" height="4" viewBox="0 0 8 4"><path d="M0 4L4.0 0 8 4z" fill="#ffffff"/></svg>
<svg style="left:1783px;top:1021px;" width="16" height="15" viewBox="0 0 16 15"><path d="M8 14.500V8.500L2.500 2M8 8.500 13.500 2" fill="none" stroke="#EBD9D6" stroke-width="1.400"/><path d="M.800 4V.800H4M12 .800h3.200V4" fill="none" stroke="#EBD9D6" stroke-width="1.200"/></svg>
<div style="top:1020.5px;line-height:16px;font-size:12px;color:#ffffff;white-space:pre;left:1805px;letter-spacing:-0.112px;">master</div>
<svg style="left:1846px;top:1026px" width="8" height="4" viewBox="0 0 8 4"><path d="M0 4L4.0 0 8 4z" fill="#ffffff"/></svg>
<svg style="left:1881px;top:1020px;" width="21" height="19" viewBox="0 0 21 19"><path d="M7.500 1.500c3 0 4.500 2.300 4.500 5v3.500l1.500 2.500H1.500L3 10V6.500c0-2.700 1.500-5 4.500-5z" fill="#D9B5B0"/><path d="M6 13.500h3" stroke="#D9B5B0" stroke-width="1.500"/><circle cx="14.500" cy="12.300" r="5.500" fill="#fff"/></svg>
<div style="left:1890.500px;top:1025.500px;width:10px;height:14px;line-height:14px;font-size:10px;font-weight:bold;color:#222;text-align:center;">1</div>
<div style="left:835px;top:1040px;width:48px;height:40px;background:#4C5656;"></div>
<div style="left:55px;top:1078px;width:40px;height:2px;background:#76B9ED;"></div>
<div style="left:86px;top:1078px;width:9px;height:2px;background:#5E96C4;"></div>
<div style="left:86px;top:1078px;width:1px;height:2px;background:#3a4a55;"></div>
<div style="left:153px;top:1078px;width:39px;height:2px;background:#76B9ED;"></div>
<div style="left:184px;top:1078px;width:8px;height:2px;background:#5E96C4;"></div>
<div style="left:184px;top:1078px;width:1px;height:2px;background:#3a4a55;"></div>
<div style="left:300px;top:1078px;width:40px;height:2px;background:#76B9ED;"></div>
<div style="left:331px;top:1078px;width:9px;height:2px;background:#5E96C4;"></div>
<div style="left:331px;top:1078px;width:1px;height:2px;background:#3a4a55;"></div>
<div style="left:349px;top:1078px;width:40px;height:2px;background:#76B9ED;"></div>
<div style="left:398px;top:1078px;width:40px;height:2px;background:#76B9ED;"></div>
<div style="left:643px;top:1078px;width:40px;height:2px;background:#76B9ED;"></div>
<div style="left:835px;top:1078px;width:48px;height:2px;background:#76B9ED;"></div>
<div style="left:888px;top:1078px;width:40px;height:2px;background:#76B9ED;"></div>
<svg style="left:15.5px;top:1051.5px;" width="17" height="17" viewBox="0 0 17 17"><path d="M0 2.400 7.200 1.400v6.900H0zM8 1.300 17 0v8.300H8zM0 9.100h7.200v6.800L0 14.900zM8 9.100h9V17L8 15.800z" fill="#fff"/></svg>
<svg style="left:63.5px;top:1050.5px;" width="23" height="19" viewBox="0 0 23 19"><path d="M.5 1.500a1 1 0 0 1 1-1h6.500l1.500 2H22a1 1 0 0 1 1 1V6H.5z" fill="#EFA91F"/><path d="M0 4.500h23V17.500a1 1 0 0 1-1 1H1a1 1 0 0 1-1-1z" fill="#FFD869"/><path d="M4.500 18.500v-6a1.500 1.500 0 0 1 1.500-1.500h11a1.500 1.500 0 0 1 1.500 1.500v6h-4v-4h-6v4z" fill="#2F95E3"/></svg>
<svg style="left:112px;top:1050px;" width="23" height="19" viewBox="0 0 23 19"><path d="M0 0h23v19H0z" fill="#8C8C8C"/><path d="M0 0h23v2.500H0z" fill="#B5B5B5"/><path d="M1 2.500h21v15.500H1z" fill="#000"/><path d="M3 6.500h1.500M5.500 5.500v2M7 6.500h1.200" stroke="#ddd" stroke-width="1.300"/><path d="M11 8.300h8.500" stroke="#eee" stroke-width="1.300"/></svg>
<svg style="left:161px;top:1047px;" width="24" height="25" viewBox="0 0 24 25"><defs><linearGradient id="ffa" x1=".8" y1="0" x2=".25" y2="1"><stop offset="0" stop-color="#FFE847"/><stop offset=".45" stop-color="#FF9A1F"/><stop offset="1" stop-color="#F6306A"/></linearGradient><radialGradient id="ffb" cx=".6" cy=".35" r=".7"><stop offset="0" stop-color="#B44BE6"/><stop offset="1" stop-color="#5B3ADF"/></radialGradient></defs><path d="M14 1c2 1.800 2 3.500 3.500 4.500C19 3.500 18.500 2 18.500 2c4 3 5.500 8 5 12-.800 6-5.500 10.500-11.500 10.500C5.500 24.500.500 19.500.500 13.500c0-3.500 1.500-6 3-7.500 0 1 .300 2 .800 2.500C5 6.500 6.500 5 9 4.500c2-.400 4-1.500 5-3.500z" fill="url(#ffa)"/><circle cx="12.300" cy="13" r="6" fill="url(#ffb)"/><path d="M5 10c1.500-1 3.500-1 5 .500 1.200 1 3 .500 3.500 0-.500 1.500-2 2-3 2.500-1.500.800-1.500 3 .500 4 2.500 1.200 5.500 0 6.500-2.500 1 5-3.500 8.500-8 7.500-5-1-7-7-4.500-12z" fill="#FF7139"/><path d="M4 8.500c1-1 2.500-1.300 4-.500 1 .500 1.500 1.500 2.500 2-2-.500-3.500 0-4.500 1-.800-.500-1.500-1.500-2-2.500z" fill="#FFB83D"/></svg>
<svg style="left:210px;top:1049px;" width="24" height="23" viewBox="0 0 24 23"><path d="M7 2.500c3.500-2 5.500.500 8.500-.500L14 10c-3 1-5-1.500-8.500.500z" fill="#E2543D"/><path d="M16.500 2c2.500 1 4.500.500 7-1L22 9c-2.500 1.500-4.500 2-7 1z" fill="#7DBB42"/><path d="M5.500 11.500c3.500-2 5.500.500 8.500-.500L12.500 19c-3 1-5-1.500-8.500.500z" fill="#3F80CF"/><path d="M15 11c2.500 1 4.500.500 7-1l-1.500 8c-2.500 1.500-4.500 2-7 1z" fill="#F7C82F"/><circle cx="8.500" cy="8.500" r="5.300" fill="#CDEBFA" stroke="#9AA3AD" stroke-width="1.600"/><circle cx="7" cy="7" r="2" fill="#fff" opacity=".8"/><path d="M12.500 12.500l6.500 7" stroke="#C9922E" stroke-width="3" stroke-linecap="round"/></svg>
<svg style="left:260px;top:1049px;" width="21" height="19" viewBox="0 0 21 19"><path d="M.600.600h19.800v17.800H.600z" fill="#0B0F5E" stroke="#8EC3F5" stroke-width="1.200"/></svg>
<div style="left:260px;top:1050px;width:21px;height:16px;line-height:16px;font-size:12.500px;font-weight:bold;color:#8EC3F5;text-align:center;letter-spacing:-.3px;">Ps</div>
<svg style="left:308px;top:1050px;" width="24" height="19" viewBox="0 0 24 19"><path d="M1.500 11C4 5.500 13 3.500 20 8c-3-1-6.500-1-9 0 3-1 7 0 9 2-4 6.500-14 7.500-18.500 1z" fill="none" stroke="#F2A11E" stroke-width="1.800"/><path d="M10.500 10.500c0-1.200 1.800-1.200 1.800.200 0 2-3.500 2-3.500-.500 0-3 5.500-3 5.500.500 0 3.500-6.500 4-7-.500" fill="none" stroke="#D8261C" stroke-width="1.200"/><path d="M2.500 5.500l2-2.500 1 3zM8 2.500 10 0l1 3zM14 2l2.200-2 .6 3zM19.500 4l2.500-1.500V5.500z" fill="#F2A11E"/><path d="M19 12.500c1.500-.5 3-.2 4 .5" fill="none" stroke="#F2A11E" stroke-width="1"/></svg>
<svg style="left:357px;top:1048px;" width="24" height="24" viewBox="0 0 24 24"><path d="M2 2h22v22H2z" fill="#8E8E8E"/><path d="M0 0h20l2 2v20H0z" fill="#1212D6"/><path d="M6 0h10v6.500H6z" fill="#C9CBD3"/><path d="M11.500 1h3v4.500h-3z" fill="#1212D6"/><path d="M3.500 10h15v12h-15z" fill="#fff"/><path d="M3.500 12.500h15M3.500 15h15" stroke="#E8353B" stroke-width="1.500"/><path d="M3.500 17h15v5h-15z" fill="#E41F26"/><path d="M4 19.500h2.500M8 19.500h3" stroke="#fff" stroke-width="1"/><path d="M1.500 1.500h1.500v1.500H1.500zM17 3h2v1h-2z" fill="#DDE"/></svg>
<svg style="left:407px;top:1048px;" width="22" height="24" viewBox="0 0 22 24"><path d="M.500.500h13l4.500 4.500v18.500H.500z" fill="#F7F7F7" stroke="#9C9C9C" stroke-width=".9"/><path d="M13.500.500v4.500h4.500z" fill="#D0D0D0"/><defs><linearGradient id="npg" x1="0" y1="0" x2="0" y2="1"><stop offset="0" stop-color="#E8F5C8"/><stop offset="1" stop-color="#5DB52B"/></linearGradient></defs><path d="M1.200 8h16v15H1.200z" fill="url(#npg)"/><path d="M5 6v7.500" stroke="#333" stroke-width="1.800"/><path d="M7.500 10h3.500" stroke="#333" stroke-width="1.200" stroke-dasharray="1.300 .700"/><path d="M19.500 1 21.800 2.300 14 17l-2.500 2 .300-3.300z" fill="#F2B632" stroke="#9B6D12" stroke-width=".5"/><path d="M19.500 1 21.800 2.300 21 3.800 18.700 2.500z" fill="#E0566A"/></svg>
<svg style="left:455px;top:1048px;" width="24" height="24" viewBox="0 0 24 24"><path d="M7 9h15.500v12a2 2 0 0 1-2 2H9a2 2 0 0 1-2-2z" fill="#FCFCFA" stroke="#8DBF6A" stroke-width=".9"/><path d="M8 19.500h13.500M8 21.300h13.500" stroke="#D5D5D0" stroke-width=".7"/><path d="M.800 14.500 7 1h16.500L18 14.500z" fill="#6FC13C"/><path d="M.800 14.500H18l-.5 1.500H1.500z" fill="#4C9625"/></svg>
<div style="left:461px;top:1052px;font-size:7.500px;line-height:9px;font-weight:bold;color:#2E6A14;transform:skewX(-24deg) rotate(-8deg);letter-spacing:.4px;">LITE</div>
<svg style="left:503px;top:1048px;" width="24" height="24" viewBox="0 0 24 24"><defs><linearGradient id="nb" x1="0" y1="0" x2="1" y2="1"><stop offset="0" stop-color="#D6EEF7"/><stop offset=".5" stop-color="#8CC6DA"/><stop offset="1" stop-color="#BFE3EF"/></linearGradient></defs><path d="M8 1.500 21 3l-3.500 19L1.500 17z" fill="url(#nb)"/><path d="M8 1.500 21 3l-.8 3.500L7 4.500z" fill="#A9D8E8"/><path d="M17.500 22 21 3l1.500 1.200-3.300 18.300z" fill="#E3B86A"/><path d="M9 3.500v-2M11 3.700v-2M13 4v-2M15 4.200v-2M17 4.400v-2M19 4.600v-2" stroke="#7FA8B8" stroke-width=".7"/></svg>
<svg style="left:553px;top:1048px;" width="23" height="24" viewBox="0 0 23 24"><defs><linearGradient id="mrg" x1="0" y1="0" x2="0" y2="1"><stop offset="0" stop-color="#3a3a3a"/><stop offset=".45" stop-color="#0a0a0a"/><stop offset="1" stop-color="#222"/></linearGradient></defs><path d="M3 .500h17a2.500 2.500 0 0 1 2.500 2.500v18a2.500 2.500 0 0 1-2.500 2.500H3A2.500 2.500 0 0 1 .500 21V3A2.500 2.500 0 0 1 3 .500z" fill="url(#mrg)" stroke="#4a4a4a" stroke-width=".8"/></svg>
<div style="left:554px;top:1053px;width:22px;font-size:14px;line-height:16px;font-weight:bold;text-align:center;letter-spacing:-1px;"><span style="color:#1E62F0;font-size:12px">m</span><span style="color:#F2F2F2">R</span></div>
<svg style="left:602px;top:1048px;" width="25" height="24" viewBox="0 0 25 24"><path d="M.500 1.500h7v8.500h-7z" fill="#F2B82E"/><ellipse cx="4" cy="1.500" rx="3.500" ry="1.300" fill="#FBE39A"/><ellipse cx="4" cy="10" rx="3.500" ry="1.300" fill="#E0A21C"/><path d="M11 1.500h7.500v7M1.500 13.500v5h6.500" fill="none" stroke="#7AC142" stroke-width="1.300" stroke-dasharray="1.500 1.500"/><path d="M9.500 12 21 23" stroke="#C8CDD2" stroke-width="2.400" stroke-linecap="round"/><path d="M21 12.500 10 23" stroke="#E8B04A" stroke-width="2.200" stroke-linecap="round"/><path d="M7.500 10.500c1.500-1.500 4-1 5 .500l-2 2c-1-1-2-.500-3-2.500z" fill="#C8CDD2"/><path d="M18 10l5 3-2.500 2.500-3.500-4z" fill="#AEB6BE"/></svg>
<svg style="left:651px;top:1048px;" width="25" height="24" viewBox="0 0 25 24"><path d="M.500 3.500h13.500v13H.500z" fill="#F5B82E"/><ellipse cx="7.200" cy="3.500" rx="6.700" ry="2.800" fill="#FDF3D8"/><ellipse cx="7.200" cy="16.500" rx="6.700" ry="2.800" fill="#F5B82E"/><path d="M17.500 1.500h5.500v5.500M1.500 19v4.500h5.500" fill="none" stroke="#3FA535" stroke-width="1.800"/><path d="M10.500 12.500 22 23.500M22 12.500 11 23.500" stroke="#5A6066" stroke-width="2.600" stroke-linecap="round"/><path d="M10.500 12.500 22 23.500M22 12.500 11 23.500" stroke="#B9BFC5" stroke-width="1.200" stroke-linecap="round"/></svg>
<svg style="left:700px;top:1050px;" width="25" height="23" viewBox="0 0 25 23"><path d="M.500.500h20v16.500H.500z" fill="#F1F4F7" stroke="#A9B4BE" stroke-width="1"/><path d="M.500.500h20v2.500H.500z" fill="#C9D6E2"/><defs><linearGradient id="srg" x1="0" y1="0" x2="1" y2="1"><stop offset="0" stop-color="#5C8FC2"/><stop offset="1" stop-color="#4FAE7A"/></linearGradient></defs><path d="M2.500 5h8.500v10H2.500z" fill="url(#srg)"/><path d="M13 5.500h5M13 8h5M13 10.500h3" stroke="#8FA0B0" stroke-width="1.200"/><path d="M18.500 4.500v6" stroke="#2F78D0" stroke-width="1"/><circle cx="18.500" cy="16.500" r="5.500" fill="#F4F4F4" stroke="#BDBDBD" stroke-width=".8"/><path d="M16.300 14.300h4.400v4.400h-4.400z" fill="#E0161F"/></svg>
<svg style="left:749px;top:1048px;" width="26" height="25" viewBox="0 0 26 25"><path d="M1.500 1 20 2.500 18.500 16 3 14.500z" fill="#D5DAE2" stroke="#AAB2BC" stroke-width=".6"/><path d="M3 2.500 18.500 3.700 17.300 14.500 4.300 13.300z" fill="#1636D8"/><path d="M3 2.500l7 .6 1 10.500-6.700-.3z" fill="#3F6CF2"/><path d="M8 15.500l6 .500 1 4-9-.500z" fill="#C9CED6"/><ellipse cx="11" cy="21" rx="6.500" ry="2" fill="#DDE1E7"/><circle cx="19" cy="19" r="5.500" fill="#E9EDE6" stroke="#C9CFC5" stroke-width=".6"/><path d="M16.500 16.500l2 2.500-2 2.500M21.500 16.500l-2 2.500 2 2.500" fill="none" stroke="#2E9A3B" stroke-width="1.300"/></svg>
<svg style="left:799px;top:1048px;" width="23" height="24" viewBox="0 0 23 24"><path d="M1.500 8.500h20.500v14.500H1.500z" fill="#FAFAFA" stroke="#6E6E6E" stroke-width="1"/><path d="M.200 4.500 19.500.200l1 4L1.200 8.500z" fill="#1C1C1C"/><path d="M2.500 4.300l2 3.300M6.800 3.400l2 3.300M11.100 2.400l2 3.300M15.400 1.500l2 3.300" stroke="#fff" stroke-width="2"/></svg>
<div style="left:800px;top:1058px;width:22px;font-size:11.500px;line-height:13px;font-weight:bold;text-align:center;letter-spacing:-.4px;"><span style="color:#E2722A">3</span><span style="color:#2F7AD0">2</span><span style="color:#3FA64A">1</span></div>
<svg style="left:847px;top:1048px;" width="24" height="24" viewBox="0 0 24 24"><path d="M17.500 0 24 2.600v18.800L17.500 24 7.400 14.400 2.600 18.200 0 16.900V7.100l2.600-1.300 4.800 3.800zM2.700 9.300v5.400L5.600 12zm8.600 2.700 6.200 4.900V7.100z" fill="#8A4FD3"/><path d="M17.500 0 24 2.600v18.800L17.500 24z" fill="#C08EF5"/><path d="M17.500 0 7.400 9.600l3.900 2.400 6.200-4.900z" fill="#9D63E0"/></svg>
<svg style="left:896px;top:1048px;" width="24" height="24" viewBox="0 0 24 24"><path d="M0 0h24v24H0z" fill="#B30B0B"/><path d="M.500.500h23v23H.500z" fill="none" stroke="#7A0000" stroke-width="1" stroke-dasharray="1.200 1.200"/><path d="M4.500 19 7.800 5h9l-.7 3H10.600l-.7 3h4.600l-.7 3H9.200L8 19zM12.500 19l6.800-8h-4.600l.7-3H23.500l-.6 2.600-6.300 7.400H21l-.7 3z" fill="#fff" transform="translate(-1.500 0)"/></svg>
<svg style="left:1586px;top:1051px;" width="19" height="19" viewBox="0 0 19 19"><path d="M13 .800A9.500 9.500 0 1 1 .800 13 9.300 9.300 0 0 0 13 .800z" fill="#FFC61A"/><path d="M13 .800A9.500 9.500 0 0 1 17 14 9.300 9.300 0 0 0 13 .800z" fill="#FFE27A" opacity=".6"/></svg>
<div style="top:1051.0px;line-height:20px;font-size:15px;color:#fff;white-space:pre;left:1615px;letter-spacing:-1.129px;">24°C</div>
<div style="top:1051.0px;line-height:20px;font-size:15px;color:#fff;white-space:pre;left:1653px;letter-spacing:-0.769px;">Clear</div>
<svg style="left:1700px;top:1055px;" width="14" height="9" viewBox="0 0 14 9"><path d="M1 8 7 2l6 6" fill="none" stroke="#fff" stroke-width="1.400"/></svg>
<svg style="left:1722px;top:1053px;" width="18" height="16" viewBox="0 0 18 16"><path d="M3.500 1.500h13v9h-13z" fill="none" stroke="#fff" stroke-width="1.200"/><path d="M10 10.500v3M6 14.500h8" stroke="#fff" stroke-width="1.200"/><path d="M.600 1h4v4.500h-4z" fill="#232B2B" stroke="#fff" stroke-width="1"/></svg>
<svg style="left:1746px;top:1052px;" width="18" height="17" viewBox="0 0 18 17"><path d="M1 6h3l4-4v13l-4-4H1z" fill="none" stroke="#fff" stroke-width="1.200"/><path d="M10.500 6c1 1.500 1 3.500 0 5M13 4c2 3 2 6 0 9M15.500 2c3 4 3 9 0 13" fill="none" stroke="#fff" stroke-width="1.100"/></svg>
<div style="top:1052.0px;line-height:16px;font-size:12px;color:#fff;white-space:pre;left:1773px;letter-spacing:-1.001px;">ENG</div>
<div style="top:1042.5px;line-height:16px;font-size:12px;color:#fff;white-space:pre;left:1811px;letter-spacing:-0.338px;">12:48 AM</div>
<div style="top:1061.5px;line-height:16px;font-size:12px;color:#fff;white-space:pre;left:1809px;letter-spacing:-0.154px;">6/12/2021</div>
<svg style="left:1879px;top:1051px;" width="18" height="16" viewBox="0 0 18 16"><path d="M.600.600h15.800v11.800H6l-3 3v-3H.600z" fill="#fff"/><path d="M3 4h11M3 6.500h11M3 9h8" stroke="#232B2B" stroke-width="1"/></svg>
<div style="left:1887px;top:1059px;width:15px;height:15px;border-radius:8px;background:#232B2B;border:1px solid #999;color:#fff;font-size:10px;line-height:13px;text-align:center;">3</div>
<div style="left:1915px;top:1040px;width:1px;height:40px;background:#6a7070;"></div>
<div style="top:945.0px;line-height:26px;font-size:20px;color:rgba(168,170,180,0.62);white-space:pre;left:1599.5px;letter-spacing:-0.115px;">Activate Windows</div>
<div style="top:970.5px;line-height:20px;font-size:15px;color:rgba(168,170,180,0.62);white-space:pre;left:1599.5px;letter-spacing:-0.051px;">Go to Settings to activate Windows.</div>
<svg style="left:1468px;top:715px" width="7" height="16" viewBox="0 0 7 16" shape-rendering="crispEdges" fill="#000"><rect x="0" y="0" width="3" height="1"/><rect x="4" y="0" width="3" height="1"/><rect x="3" y="1" width="1" height="14"/><rect x="0" y="15" width="3" height="1"/><rect x="4" y="15" width="3" height="1"/></svg>
</body></html>
